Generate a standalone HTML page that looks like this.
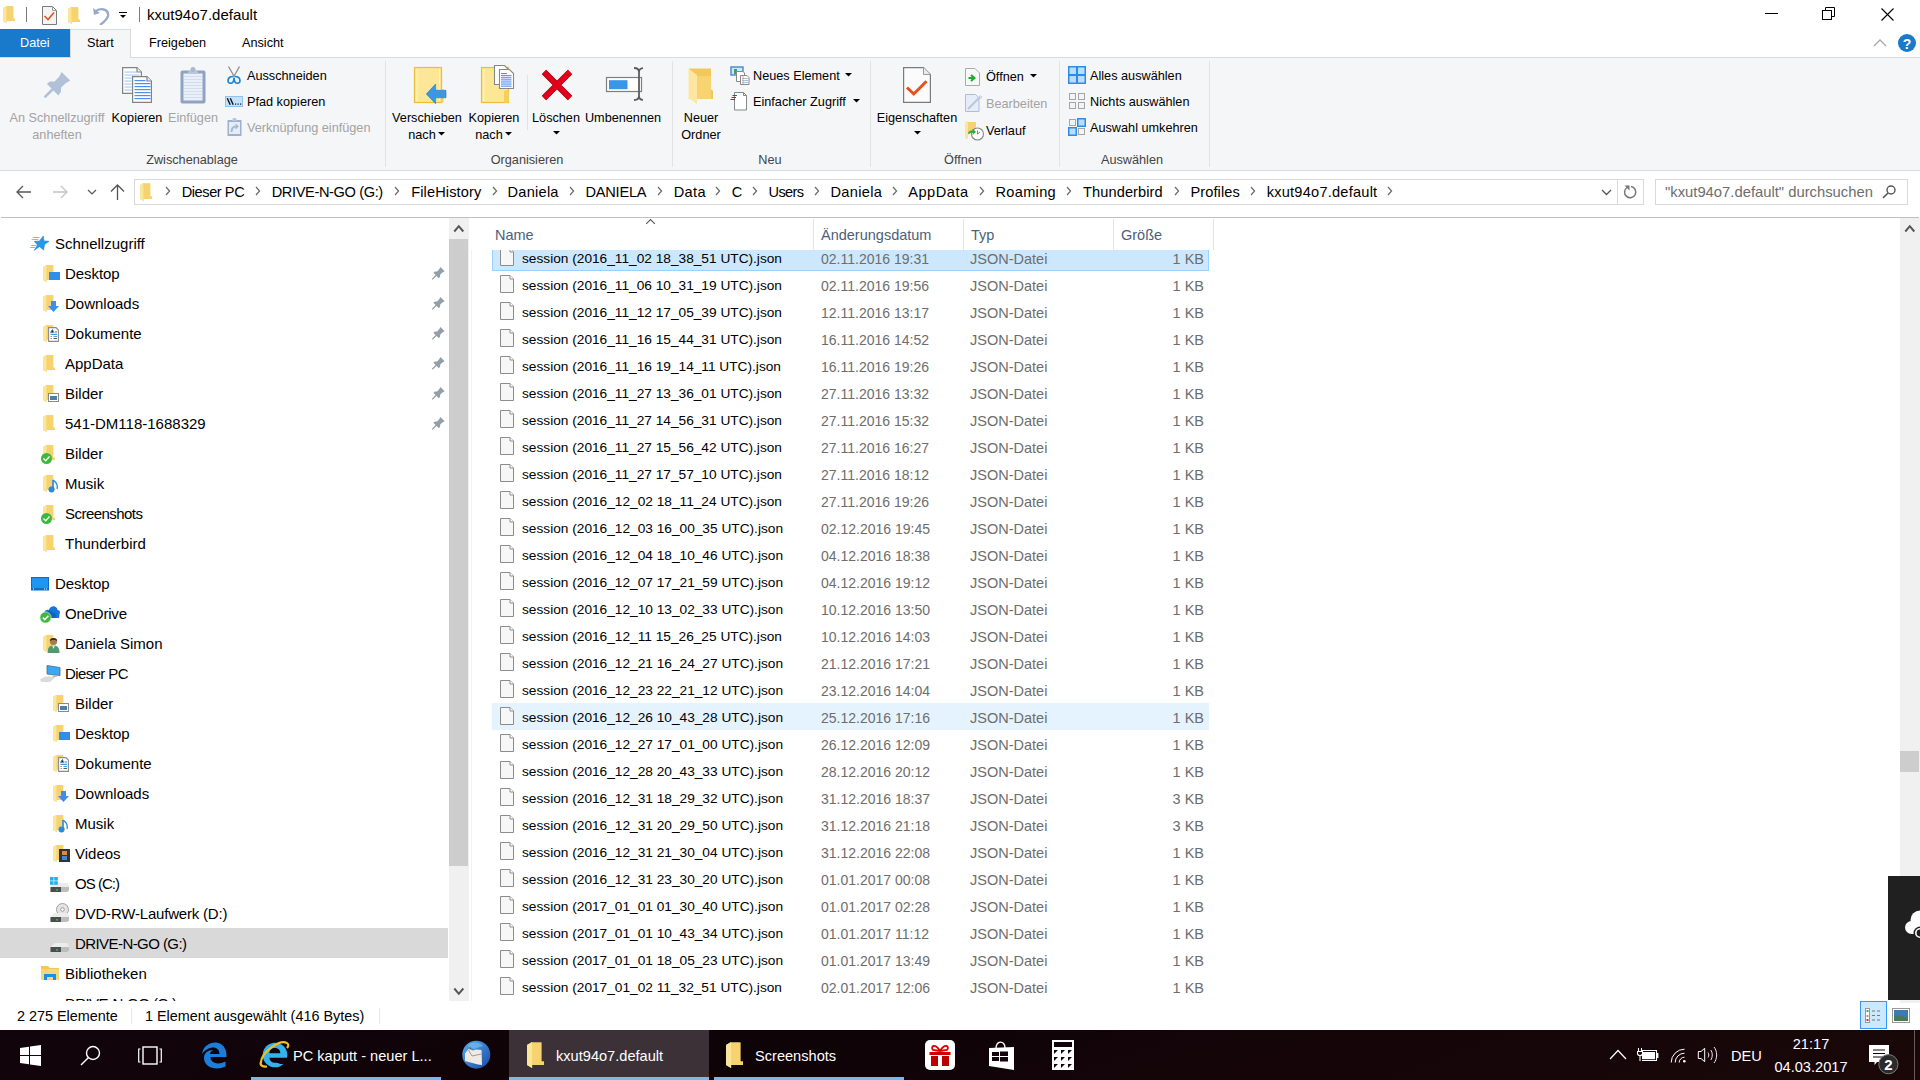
<!DOCTYPE html><html><head><meta charset="utf-8"><title>kxut94o7.default</title><style>
*{margin:0;padding:0;box-sizing:border-box}
html,body{width:1920px;height:1080px;overflow:hidden;background:#fff}
body{position:relative;font-family:"Liberation Sans",sans-serif}
.t{position:absolute;white-space:nowrap;line-height:1}
.r{position:absolute;display:block}
</style></head><body><div class="r" style="left:0px;top:0px;width:1920px;height:29px;background:#ffffff;"></div>
<svg class="r" style="left:3px;top:6px;" width="12" height="17" viewBox="0 0 12 17"><path d="M0 2.0 L3.6 0 L3.6 0.3 L10.2 0.3 L10.2 12.8 L12 12.8 L12 15.0 L3.6 15.0 L3.6 17 L0 15.0 Z" fill="#f0c85a"/><path d="M3.6 0.3 L10.2 0.3 L10.2 12.8 L12 12.8 L12 15.0 L3.6 15.0 Z" fill="#f6d36e"/><path d="M0 2.0 L3.6 0 L3.6 17 L0 15.0 Z" fill="#fbe59b"/></svg>
<div class="r" style="left:26px;top:7px;width:1px;height:15px;background:#7a7a7a;"></div>
<svg class="r" style="left:42px;top:6px;" width="15" height="19" viewBox="0 0 15 19"><path d="M0.5 0.5 H10.5 L14.5 4.5 V18.5 H0.5 Z" fill="#f4f4f4" stroke="#7b7b7b"/><path d="M10.5 0.5 V4.5 H14.5" fill="none" stroke="#9a9a9a"/><path d="M2.5 10 L6 13.5 L12 6.5" fill="none" stroke="#e8501c" stroke-width="1.6"/></svg>
<svg class="r" style="left:68px;top:7px;" width="12" height="17" viewBox="0 0 12 17"><path d="M0 2.0 L3.6 0 L3.6 0.3 L10.2 0.3 L10.2 12.8 L12 12.8 L12 15.0 L3.6 15.0 L3.6 17 L0 15.0 Z" fill="#f0c85a"/><path d="M3.6 0.3 L10.2 0.3 L10.2 12.8 L12 12.8 L12 15.0 L3.6 15.0 Z" fill="#f6d36e"/><path d="M0 2.0 L3.6 0 L3.6 17 L0 15.0 Z" fill="#fbe59b"/></svg>
<svg class="r" style="left:92px;top:6px;" width="18" height="19" viewBox="0 0 18 19"><path d="M3 6 C8 1 17 3 16 10 C15 14 12 16 8 19" fill="none" stroke="#98aac6" stroke-width="2.4"/><path d="M1 2 L2 9 L8 7 Z" fill="#98aac6"/></svg>
<svg class="r" style="left:119px;top:12px;" width="8" height="7" viewBox="0 0 8 7"><rect x="0" y="0" width="8" height="1" fill="#000"/><path d="M1 3 H7 L4 6 Z" fill="#000"/></svg>
<div class="r" style="left:139px;top:7px;width:1px;height:15px;background:#7a7a7a;"></div>
<div class="t " style="left:147px;top:7.30px;font-size:15px;color:#000;">kxut94o7.default</div>
<div class="r" style="left:1765px;top:13px;width:13px;height:1px;background:#000;"></div>
<svg class="r" style="left:1822px;top:7px;" width="13" height="13" viewBox="0 0 13 13"><rect x="0.5" y="3.5" width="9" height="9" fill="none" stroke="#000"/><path d="M3.5 3.5 V0.5 H12.5 V9.5 H9.5" fill="none" stroke="#000"/></svg>
<svg class="r" style="left:1881px;top:8px;" width="13" height="13" viewBox="0 0 13 13"><path d="M0.5 0.5 L12.5 12.5 M12.5 0.5 L0.5 12.5" stroke="#000" stroke-width="1.1"/></svg>
<div class="r" style="left:0px;top:29px;width:1920px;height:28px;background:#ffffff;"></div>
<div class="r" style="left:0px;top:29px;width:70px;height:28px;background:#1979ca;"></div>
<div class="t " style="left:20px;top:37.25px;font-size:12.7px;color:#ffffff;">Datei</div>
<div class="r" style="left:70px;top:29px;width:61px;height:29px;background:#f5f6f7;border:1px solid #dadbdc;border-bottom:none"></div>
<div class="t " style="left:87px;top:37.25px;font-size:12.7px;color:#000;">Start</div>
<div class="t " style="left:149px;top:37.25px;font-size:12.7px;color:#000;">Freigeben</div>
<div class="t " style="left:242px;top:37.25px;font-size:12.7px;color:#000;">Ansicht</div>
<svg class="r" style="left:1873px;top:38px;" width="14" height="9" viewBox="0 0 14 9"><path d="M1 8 L7 2 L13 8" fill="none" stroke="#a8a8a8" stroke-width="1.3"/></svg>
<svg class="r" style="left:1898px;top:34px;" width="18" height="18" viewBox="0 0 18 18"><circle cx="9" cy="9" r="9" fill="#1979ca"/><text x="9" y="14.5" font-family="Liberation Sans" font-size="14" font-weight="bold" fill="#fff" text-anchor="middle">?</text></svg>
<div class="r" style="left:0px;top:57px;width:1920px;height:114px;background:#f5f6f7;border-top:1px solid #dadbdc;border-bottom:1px solid #dadbdc"></div>
<div class="r" style="left:71px;top:57px;width:59px;height:1px;background:#f5f6f7;"></div>
<div class="r" style="left:385px;top:61px;width:1px;height:106px;background:#e2e3e4;"></div>
<div class="r" style="left:672px;top:61px;width:1px;height:106px;background:#e2e3e4;"></div>
<div class="r" style="left:870px;top:61px;width:1px;height:106px;background:#e2e3e4;"></div>
<div class="r" style="left:1059px;top:61px;width:1px;height:106px;background:#e2e3e4;"></div>
<div class="r" style="left:1209px;top:61px;width:1px;height:106px;background:#e2e3e4;"></div>
<div class="r" style="left:527px;top:75px;width:1px;height:55px;background:#e2e3e4;"></div>
<div class="t" style="left:42px;width:300px;text-align:center;top:153.75px;font-size:12.7px;color:#444;">Zwischenablage</div>
<div class="t" style="left:377px;width:300px;text-align:center;top:153.75px;font-size:12.7px;color:#444;">Organisieren</div>
<div class="t" style="left:620px;width:300px;text-align:center;top:153.75px;font-size:12.7px;color:#444;">Neu</div>
<div class="t" style="left:813px;width:300px;text-align:center;top:153.75px;font-size:12.7px;color:#444;">Öffnen</div>
<div class="t" style="left:982px;width:300px;text-align:center;top:153.75px;font-size:12.7px;color:#444;">Auswählen</div>
<svg class="r" style="left:44px;top:72px;" width="27" height="27" viewBox="0 0 27 27"><path d="M17.6 0 L26.2 8.6 L21.7 11.2 L17.1 15.6 L16.9 19.7 L14.4 23.4 L2.8 11.8 L6 9.4 L10.6 9.4 L15.3 4.4 Z" fill="#b1c1d7"/><path d="M8.5 17.5 L1.3 24.7" stroke="#b1c1d7" stroke-width="2.6" stroke-linecap="round"/></svg>
<svg class="r" style="left:122px;top:67px;" width="31" height="37" viewBox="0 0 31 37"><path d="M0.6 0.6 H15 L19.4 5 V26.4 H0.6 Z" fill="#fff" stroke="#838383" stroke-width="1.2"/><path d="M15 0.6 V5 H19.4" fill="#eee" stroke="#838383" stroke-width="1.2"/><rect x="2.5" y="4.5" width="12" height="1.1" fill="#a9c9f2"/><rect x="2.5" y="7.5" width="15" height="1.1" fill="#a9c9f2"/><rect x="2.5" y="10.5" width="15" height="1.1" fill="#a9c9f2"/><rect x="2.5" y="13.5" width="15" height="1.1" fill="#a9c9f2"/><rect x="2.5" y="16.5" width="15" height="1.1" fill="#a9c9f2"/><rect x="2.5" y="19.5" width="15" height="1.1" fill="#a9c9f2"/><rect x="2.5" y="22.5" width="15" height="1.1" fill="#a9c9f2"/><path d="M10.6 9.6 H25 L29.4 14 V35.4 H10.6 Z" fill="#fff" stroke="#838383" stroke-width="1.2"/><path d="M25 9.6 V14 H29.4" fill="#eee" stroke="#838383" stroke-width="1.2"/><rect x="12.5" y="13" width="11" height="1.2" fill="#4d8fef"/><rect x="12.5" y="16" width="16" height="1.2" fill="#4d8fef"/><rect x="12.5" y="19" width="16" height="1.2" fill="#4d8fef"/><rect x="12.5" y="22" width="16" height="1.2" fill="#4d8fef"/><rect x="12.5" y="25" width="16" height="1.2" fill="#4d8fef"/><rect x="12.5" y="28" width="16" height="1.2" fill="#4d8fef"/><rect x="12.5" y="31" width="16" height="1.2" fill="#4d8fef"/></svg>
<svg class="r" style="left:180px;top:66px;" width="26" height="38" viewBox="0 0 26 38"><rect x="0.5" y="4.5" width="25" height="33" rx="2" fill="#8fa2c2"/><rect x="3.5" y="7.5" width="19" height="27" fill="#e9f0fa"/><rect x="3.5" y="10" width="19" height="0.8" fill="#cdd8e8"/><rect x="3.5" y="13" width="19" height="0.8" fill="#cdd8e8"/><rect x="3.5" y="16" width="19" height="0.8" fill="#cdd8e8"/><rect x="3.5" y="19" width="19" height="0.8" fill="#cdd8e8"/><rect x="3.5" y="22" width="19" height="0.8" fill="#cdd8e8"/><rect x="3.5" y="25" width="19" height="0.8" fill="#cdd8e8"/><rect x="3.5" y="28" width="19" height="0.8" fill="#cdd8e8"/><rect x="3.5" y="31" width="19" height="0.8" fill="#cdd8e8"/><path d="M7 8 L9 5 H17 L19 8 Z" fill="#b9c6da"/><circle cx="13" cy="3.5" r="2.5" fill="#a9b8d0"/></svg>
<svg class="r" style="left:227px;top:66px;" width="14" height="19" viewBox="0 0 14 19"><path d="M1.5 0.5 L7.5 11 M12.5 0.5 L6.5 11" stroke="#8d8d8d" stroke-width="1.3"/><path d="M6 10.5 C3 10.5 1 12 1 15 C1 17.5 4.5 18 6 16 C7 14.5 7 12.5 7 11.5 C7 12.5 7 14.5 8 16 C9.5 18 13 17.5 13 15 C13 12 11 10.5 8 10.5" fill="none" stroke="#1a86d6" stroke-width="1.7"/></svg>
<svg class="r" style="left:225px;top:96px;" width="18" height="11" viewBox="0 0 18 11"><rect x="0.5" y="0.5" width="17" height="10" fill="#c5e2fb" stroke="#8fc3ef"/><path d="M2.3 2.3 L5.2 8.7 M5.3 2.3 L8.2 8.7" stroke="#111" stroke-width="1.4"/><rect x="10" y="7.5" width="1.2" height="1.2" fill="#111"/><rect x="12.5" y="7.5" width="1.2" height="1.2" fill="#111"/><rect x="15" y="7.5" width="1.2" height="1.2" fill="#111"/></svg>
<svg class="r" style="left:227px;top:117px;" width="15" height="19" viewBox="0 0 15 19"><rect x="0.5" y="3" width="14" height="16" fill="#9eb0cc"/><rect x="2" y="5" width="11" height="12" fill="#e5ecf6"/><path d="M5 4 L6 1 H9 L10 4 Z" fill="#b9c6da"/><path d="M4.5 15 C4.5 11 6.5 9.5 9 9.5" fill="none" stroke="#a9b8d0" stroke-width="2"/><path d="M8.5 6.5 L12 9.5 L8.5 12.5 Z" fill="#a9b8d0"/></svg>
<svg class="r" style="left:413px;top:66px;" width="34" height="38" viewBox="0 0 34 38"><rect x="1.5" y="1.5" width="27" height="35" fill="#fde796" stroke="#eabd3c" stroke-width="1.2"/><rect x="3.5" y="3" width="1" height="32" fill="#fff3c4"/><rect x="26" y="3" width="1" height="32" fill="#fff3c4"/><rect x="28" y="23" width="2.5" height="13.5" fill="#f5cf5a"/><path d="M13.3 28 L22.6 18 V24.3 H33 V31.8 H22.6 V37.8 Z" fill="#3a96e6" stroke="#2677c2" stroke-width="0.6"/></svg>
<svg class="r" style="left:480px;top:64px;" width="35" height="40" viewBox="0 0 35 40"><rect x="1.5" y="3.5" width="27" height="35" fill="#fde796" stroke="#eabd3c" stroke-width="1.2"/><rect x="3.5" y="5" width="1" height="32" fill="#fff3c4"/><rect x="24" y="26" width="5" height="13" rx="2" fill="#f5cf5a"/><path d="M14.5 1.5 H24.5 L28.5 5.5 V20.5 H14.5 Z" fill="#fff" stroke="#888" stroke-width="1.1"/><path d="M19.5 5.5 H29.5 L33.5 9.5 V24.5 H19.5 Z" fill="#fff" stroke="#888" stroke-width="1.1"/><rect x="21" y="9.0" width="6" height="1.1" fill="#4d8fef"/><rect x="21" y="11.1" width="10.5" height="1.1" fill="#4d8fef"/><rect x="21" y="13.2" width="10.5" height="1.1" fill="#4d8fef"/><rect x="21" y="15.3" width="10.5" height="1.1" fill="#4d8fef"/><rect x="21" y="17.4" width="10.5" height="1.1" fill="#4d8fef"/><rect x="21" y="19.5" width="10.5" height="1.1" fill="#4d8fef"/><rect x="21" y="21.6" width="10.5" height="1.1" fill="#4d8fef"/></svg>
<svg class="r" style="left:540px;top:68px;" width="34" height="34" viewBox="0 0 34 34"><path d="M4 4 L30 30 M30 4 L4 30" stroke="#9c0010" stroke-width="6.2"/><path d="M4 4 L30 30 M30 4 L4 30" stroke="#e3001b" stroke-width="5"/></svg>
<svg class="r" style="left:605px;top:67px;" width="38" height="35" viewBox="0 0 38 35"><rect x="1.5" y="10.5" width="35" height="14" fill="#fff" stroke="#7f7f7f" stroke-width="1.2"/><rect x="4" y="13.2" width="18.5" height="9" fill="#3a96e6"/><path d="M29 1 Q34 1 34 5 V29 Q34 33 29 33 M39 1 Q34 1 34 5 M39 33 Q34 33 34 29" fill="none" stroke="#5c5c5c" stroke-width="1.8"/></svg>
<svg class="r" style="left:688px;top:68px;" width="25" height="36" viewBox="0 0 25 36"><path d="M1 0.5 H23 V21 L25 23 V31 H1 Z" fill="#f2c85c"/><path d="M9 8 H23 V31 H9 Z" fill="#f7d470"/><path d="M0.5 0.5 L9 7 V36 L0.5 30 Z" fill="#fde7a0"/></svg>
<svg class="r" style="left:730px;top:66px;" width="20" height="19" viewBox="0 0 20 19"><rect x="1" y="1" width="12" height="8" fill="#cfe6fb" stroke="#3b8ad0" stroke-width="1.4"/><rect x="4" y="3" width="3" height="5" fill="#4a9a5c"/><path d="M6.5 5.5 H13 L14.5 7 V15.5 H6.5 Z" fill="#fff" stroke="#888"/><path d="M10.5 9.5 H17 L19 11.5 V18.5 H10.5 Z" fill="#fff" stroke="#888"/><path d="M12 12.5 H18 M12 14.5 H18 M12 16.5 H18" stroke="#9cc4ec" stroke-width="1"/><path d="M13 10 V18" stroke="#e98b8b" stroke-width="0.8"/></svg>
<svg class="r" style="left:730px;top:92px;" width="18" height="19" viewBox="0 0 18 19"><path d="M4.5 0.5 H13.5 L16.5 3.5 V18 H4.5 Z" fill="#fff" stroke="#888"/><path d="M13.5 0.5 V3.5 H16.5" fill="none" stroke="#888"/><path d="M2.5 3.5 H7 M1.5 5.5 H6 M0.5 7.5 H5" stroke="#1a5fb0" stroke-width="1.1"/></svg>
<svg class="r" style="left:903px;top:67px;" width="29" height="37" viewBox="0 0 29 37"><path d="M0.6 0.6 H20.5 L27.4 7.5 V35.4 H0.6 Z" fill="#fbfbfb" stroke="#7b7b7b" stroke-width="1.2"/><path d="M20.5 0.6 V7.5 H27.4" fill="#ebebeb" stroke="#9a9a9a" stroke-width="1"/><path d="M4 20.5 L10.8 27 L23.5 14.2" fill="none" stroke="#e8501c" stroke-width="3"/></svg>
<svg class="r" style="left:965px;top:68px;" width="15" height="18" viewBox="0 0 15 18"><path d="M0.5 0.5 H10 L14.5 5 V17.5 H0.5 Z" fill="#f8f8f8" stroke="#aaa"/><path d="M3.5 10 H8 M6 7 L9.5 10 L6 13" fill="none" stroke="#1dab2c" stroke-width="2"/></svg>
<svg class="r" style="left:965px;top:94px;" width="18" height="18" viewBox="0 0 18 18"><path d="M0.5 0.5 H10.5 L14 4 V17.5 H0.5 Z" fill="#e6edf8" stroke="#aebed6"/><path d="M3 15 L15 3" stroke="#b9c6da" stroke-width="2"/><path d="M14 2 L17 2.5 L15.5 5" fill="none" stroke="#b9c6da" stroke-width="0.8"/></svg>
<svg class="r" style="left:965px;top:121px;" width="20" height="20" viewBox="0 0 20 20"><path d="M0.5 1.5 L3 0 V1 H11 V13 H3 V18 L0.5 17 Z" fill="#f6d36e"/><path d="M0.5 1.5 L3 0 V18 L0.5 17 Z" fill="#fde59b"/><circle cx="12.5" cy="13" r="6" fill="#fff" stroke="#888" stroke-width="1.1"/><path d="M12.5 9.5 V13 L15 11" stroke="#666" stroke-width="0.8" fill="none"/><path d="M3 13.5 C3 10 5 9 8 9.5 L7.5 7.5 L11 11 L7.5 14 L8 12 C6 11.5 4.5 12 3 13.5 Z" fill="#2aae3a"/></svg>
<svg class="r" style="left:1068px;top:66px;" width="18" height="18" viewBox="0 0 18 18"><rect x="0" y="0" width="18" height="18" fill="#2b8de8"/><rect x="1.5" y="1.5" width="6.5" height="6.5" fill="#b9defd"/><rect x="10" y="1.5" width="6.5" height="6.5" fill="#b9defd"/><rect x="1.5" y="10" width="6.5" height="6.5" fill="#b9defd"/><rect x="10" y="10" width="6.5" height="6.5" fill="#b9defd"/></svg>
<svg class="r" style="left:1069px;top:93px;" width="16" height="16" viewBox="0 0 16 16"><rect x="0.5" y="0.5" width="6" height="6" fill="#f4f4f4" stroke="#a5a5a5"/><rect x="9.5" y="0.5" width="6" height="6" fill="#f4f4f4" stroke="#a5a5a5"/><rect x="0.5" y="9.5" width="6" height="6" fill="#f4f4f4" stroke="#a5a5a5"/><rect x="9.5" y="9.5" width="6" height="6" fill="#f4f4f4" stroke="#a5a5a5"/></svg>
<svg class="r" style="left:1068px;top:118px;" width="18" height="18" viewBox="0 0 18 18"><rect x="1.5" y="1.5" width="6" height="6" fill="#f4f4f4" stroke="#a5a5a5"/><rect x="9" y="0" width="9" height="9" fill="#2b8de8"/><rect x="10.5" y="1.5" width="6" height="6" fill="#b9defd"/><rect x="0" y="9" width="9" height="9" fill="#2b8de8"/><rect x="1.5" y="10.5" width="6" height="6" fill="#b9defd"/><rect x="10.5" y="10.5" width="6" height="6" fill="#f4f4f4" stroke="#a5a5a5"/></svg>
<div class="t" style="left:-93px;width:300px;text-align:center;top:111.75px;font-size:12.7px;color:#a3a3a3;">An Schnellzugriff</div>
<div class="t" style="left:-93px;width:300px;text-align:center;top:128.75px;font-size:12.7px;color:#a3a3a3;">anheften</div>
<div class="t" style="left:-13px;width:300px;text-align:center;top:111.75px;font-size:12.7px;color:#000;">Kopieren</div>
<div class="t" style="left:43px;width:300px;text-align:center;top:111.75px;font-size:12.7px;color:#a3a3a3;">Einfügen</div>
<div class="t" style="left:277px;width:300px;text-align:center;top:111.75px;font-size:12.7px;color:#000;">Verschieben</div>
<div class="t" style="left:272px;width:300px;text-align:center;top:128.75px;font-size:12.7px;color:#000;">nach</div>
<div class="t" style="left:344px;width:300px;text-align:center;top:111.75px;font-size:12.7px;color:#000;">Kopieren</div>
<div class="t" style="left:339px;width:300px;text-align:center;top:128.75px;font-size:12.7px;color:#000;">nach</div>
<div class="t" style="left:406px;width:300px;text-align:center;top:111.75px;font-size:12.7px;color:#000;">Löschen</div>
<div class="t" style="left:473px;width:300px;text-align:center;top:111.75px;font-size:12.7px;color:#000;">Umbenennen</div>
<div class="t" style="left:551px;width:300px;text-align:center;top:111.75px;font-size:12.7px;color:#000;">Neuer</div>
<div class="t" style="left:551px;width:300px;text-align:center;top:128.75px;font-size:12.7px;color:#000;">Ordner</div>
<div class="t" style="left:767px;width:300px;text-align:center;top:111.75px;font-size:12.7px;color:#000;">Eigenschaften</div>
<svg class="r" style="left:438px;top:132px;" width="7" height="4" viewBox="0 0 7 4"><path d="M0 0 H7 L3.5 3.5 Z" fill="#000"/></svg>
<svg class="r" style="left:505px;top:132px;" width="7" height="4" viewBox="0 0 7 4"><path d="M0 0 H7 L3.5 3.5 Z" fill="#000"/></svg>
<svg class="r" style="left:553px;top:131px;" width="7" height="4" viewBox="0 0 7 4"><path d="M0 0 H7 L3.5 3.5 Z" fill="#000"/></svg>
<svg class="r" style="left:914px;top:131px;" width="7" height="4" viewBox="0 0 7 4"><path d="M0 0 H7 L3.5 3.5 Z" fill="#000"/></svg>
<div class="t " style="left:247px;top:69.75px;font-size:12.7px;color:#000;">Ausschneiden</div>
<div class="t " style="left:247px;top:95.75px;font-size:12.7px;color:#000;">Pfad kopieren</div>
<div class="t " style="left:247px;top:121.75px;font-size:12.7px;color:#a3a3a3;">Verknüpfung einfügen</div>
<div class="t " style="left:753px;top:69.75px;font-size:12.7px;color:#000;">Neues Element</div>
<div class="t " style="left:753px;top:95.75px;font-size:12.7px;color:#000;">Einfacher Zugriff</div>
<svg class="r" style="left:845px;top:73px;" width="7" height="4" viewBox="0 0 7 4"><path d="M0 0 H7 L3.5 3.5 Z" fill="#000"/></svg>
<svg class="r" style="left:853px;top:99px;" width="7" height="4" viewBox="0 0 7 4"><path d="M0 0 H7 L3.5 3.5 Z" fill="#000"/></svg>
<div class="t " style="left:986px;top:70.75px;font-size:12.7px;color:#000;">Öffnen</div>
<svg class="r" style="left:1030px;top:74px;" width="7" height="4" viewBox="0 0 7 4"><path d="M0 0 H7 L3.5 3.5 Z" fill="#000"/></svg>
<div class="t " style="left:986px;top:97.75px;font-size:12.7px;color:#a3a3a3;">Bearbeiten</div>
<div class="t " style="left:986px;top:124.75px;font-size:12.7px;color:#000;">Verlauf</div>
<div class="t " style="left:1090px;top:69.75px;font-size:12.7px;color:#000;">Alles auswählen</div>
<div class="t " style="left:1090px;top:95.75px;font-size:12.7px;color:#000;">Nichts auswählen</div>
<div class="t " style="left:1090px;top:121.75px;font-size:12.7px;color:#000;">Auswahl umkehren</div>
<div class="r" style="left:0px;top:171px;width:1920px;height:46px;background:#ffffff;"></div>
<div class="r" style="left:1px;top:217px;width:1918px;height:1px;background:#c0c0c0;"></div>
<svg class="r" style="left:16px;top:185px;" width="16" height="14" viewBox="0 0 16 14"><path d="M1 7 H15 M7 1 L1 7 L7 13" fill="none" stroke="#555" stroke-width="1.3"/></svg>
<svg class="r" style="left:53px;top:185px;" width="16" height="14" viewBox="0 0 16 14"><path d="M0 7 H14 M8 1 L14 7 L8 13" fill="none" stroke="#c4c4c4" stroke-width="1.3"/></svg>
<svg class="r" style="left:87px;top:189px;" width="10" height="6" viewBox="0 0 10 6"><path d="M1 1 L5 5 L9 1" fill="none" stroke="#555" stroke-width="1.2"/></svg>
<svg class="r" style="left:110px;top:184px;" width="15" height="16" viewBox="0 0 15 16"><path d="M7.5 16 V1 M1 7.5 L7.5 1 L14 7.5" fill="none" stroke="#555" stroke-width="1.3"/></svg>
<div class="r" style="left:134px;top:179px;width:1510px;height:26px;background:#ffffff;border:1px solid #d9d9d9"></div>
<div class="r" style="left:1617px;top:179px;width:1px;height:26px;background:#d9d9d9;"></div>
<svg class="r" style="left:140px;top:183px;" width="12" height="18" viewBox="0 0 12 18"><path d="M0 2.2 L3.6 0 L3.6 0.4 L10.2 0.4 L10.2 13.5 L12 13.5 L12 15.8 L3.6 15.8 L3.6 18 L0 15.8 Z" fill="#f0c85a"/><path d="M3.6 0.4 L10.2 0.4 L10.2 13.5 L12 13.5 L12 15.8 L3.6 15.8 Z" fill="#f6d36e"/><path d="M0 2.2 L3.6 0 L3.6 18 L0 15.8 Z" fill="#fbe59b"/></svg>
<div class="t " style="left:181.7px;top:184.64px;font-size:14.6px;color:#000;letter-spacing:-0.438px;">Dieser PC</div>
<div class="t " style="left:271.7px;top:184.64px;font-size:14.6px;color:#000;letter-spacing:-0.375px;">DRIVE-N-GO (G:)</div>
<div class="t " style="left:411.2px;top:184.64px;font-size:14.6px;color:#000;letter-spacing:0.108px;">FileHistory</div>
<div class="t " style="left:507.5px;top:184.64px;font-size:14.6px;color:#000;letter-spacing:0.250px;">Daniela</div>
<div class="t " style="left:585.5px;top:184.64px;font-size:14.6px;color:#000;letter-spacing:-0.242px;">DANIELA</div>
<div class="t " style="left:673.7px;top:184.64px;font-size:14.6px;color:#000;letter-spacing:0.391px;">Data</div>
<div class="t " style="left:731.7px;top:184.64px;font-size:14.6px;color:#000;letter-spacing:-0.047px;">C</div>
<div class="t " style="left:768.5px;top:184.64px;font-size:14.6px;color:#000;letter-spacing:-0.652px;">Users</div>
<div class="t " style="left:830.5px;top:184.64px;font-size:14.6px;color:#000;letter-spacing:0.333px;">Daniela</div>
<div class="t " style="left:908.2px;top:184.64px;font-size:14.6px;color:#000;letter-spacing:0.534px;">AppData</div>
<div class="t " style="left:995.5px;top:184.64px;font-size:14.6px;color:#000;letter-spacing:0.299px;">Roaming</div>
<div class="t " style="left:1083.0px;top:184.64px;font-size:14.6px;color:#000;letter-spacing:0.100px;">Thunderbird</div>
<div class="t " style="left:1190.5px;top:184.64px;font-size:14.6px;color:#000;letter-spacing:0.075px;">Profiles</div>
<div class="t " style="left:1266.7px;top:184.64px;font-size:14.6px;color:#000;letter-spacing:0.226px;">kxut94o7.default</div>
<svg class="r" style="left:165px;top:186px;" width="6" height="10" viewBox="0 0 6 10"><path d="M1 1 L4.6 5 L1 9" fill="none" stroke="#6a6a6a" stroke-width="1.2"/></svg>
<svg class="r" style="left:255px;top:186px;" width="6" height="10" viewBox="0 0 6 10"><path d="M1 1 L4.6 5 L1 9" fill="none" stroke="#6a6a6a" stroke-width="1.2"/></svg>
<svg class="r" style="left:394px;top:186px;" width="6" height="10" viewBox="0 0 6 10"><path d="M1 1 L4.6 5 L1 9" fill="none" stroke="#6a6a6a" stroke-width="1.2"/></svg>
<svg class="r" style="left:491.7px;top:186px;" width="6" height="10" viewBox="0 0 6 10"><path d="M1 1 L4.6 5 L1 9" fill="none" stroke="#6a6a6a" stroke-width="1.2"/></svg>
<svg class="r" style="left:569px;top:186px;" width="6" height="10" viewBox="0 0 6 10"><path d="M1 1 L4.6 5 L1 9" fill="none" stroke="#6a6a6a" stroke-width="1.2"/></svg>
<svg class="r" style="left:657px;top:186px;" width="6" height="10" viewBox="0 0 6 10"><path d="M1 1 L4.6 5 L1 9" fill="none" stroke="#6a6a6a" stroke-width="1.2"/></svg>
<svg class="r" style="left:715px;top:186px;" width="6" height="10" viewBox="0 0 6 10"><path d="M1 1 L4.6 5 L1 9" fill="none" stroke="#6a6a6a" stroke-width="1.2"/></svg>
<svg class="r" style="left:752px;top:186px;" width="6" height="10" viewBox="0 0 6 10"><path d="M1 1 L4.6 5 L1 9" fill="none" stroke="#6a6a6a" stroke-width="1.2"/></svg>
<svg class="r" style="left:814px;top:186px;" width="6" height="10" viewBox="0 0 6 10"><path d="M1 1 L4.6 5 L1 9" fill="none" stroke="#6a6a6a" stroke-width="1.2"/></svg>
<svg class="r" style="left:892px;top:186px;" width="6" height="10" viewBox="0 0 6 10"><path d="M1 1 L4.6 5 L1 9" fill="none" stroke="#6a6a6a" stroke-width="1.2"/></svg>
<svg class="r" style="left:979px;top:186px;" width="6" height="10" viewBox="0 0 6 10"><path d="M1 1 L4.6 5 L1 9" fill="none" stroke="#6a6a6a" stroke-width="1.2"/></svg>
<svg class="r" style="left:1066px;top:186px;" width="6" height="10" viewBox="0 0 6 10"><path d="M1 1 L4.6 5 L1 9" fill="none" stroke="#6a6a6a" stroke-width="1.2"/></svg>
<svg class="r" style="left:1174px;top:186px;" width="6" height="10" viewBox="0 0 6 10"><path d="M1 1 L4.6 5 L1 9" fill="none" stroke="#6a6a6a" stroke-width="1.2"/></svg>
<svg class="r" style="left:1250px;top:186px;" width="6" height="10" viewBox="0 0 6 10"><path d="M1 1 L4.6 5 L1 9" fill="none" stroke="#6a6a6a" stroke-width="1.2"/></svg>
<svg class="r" style="left:1387px;top:186px;" width="6" height="10" viewBox="0 0 6 10"><path d="M1 1 L4.6 5 L1 9" fill="none" stroke="#6a6a6a" stroke-width="1.2"/></svg>
<svg class="r" style="left:1601px;top:189px;" width="11" height="7" viewBox="0 0 11 7"><path d="M1 1 L5.5 5.5 L10 1" fill="none" stroke="#555" stroke-width="1.3"/></svg>
<svg class="r" style="left:1623px;top:184px;" width="15" height="16" viewBox="0 0 15 16"><path d="M4 3.5 A5.6 5.6 0 1 0 8 2.6" fill="none" stroke="#777" stroke-width="1.5"/><path d="M1.5 1.5 H6.5 V6.5 Z" fill="#777"/></svg>
<div class="r" style="left:1655px;top:179px;width:253px;height:26px;background:#ffffff;border:1px solid #d9d9d9"></div>
<div class="t " style="left:1665px;top:185.47px;font-size:14.8px;color:#6d6d6d;">"kxut94o7.default" durchsuchen</div>
<svg class="r" style="left:1882px;top:185px;" width="14" height="14" viewBox="0 0 14 14"><circle cx="9" cy="5" r="4" fill="none" stroke="#555" stroke-width="1.4"/><path d="M6 8 L1 13" stroke="#555" stroke-width="1.6"/></svg>
<div class="r" style="left:0;top:218px;width:449px;height:783px;overflow:hidden;background:#fff">
<div class="r" style="left:0;top:-218px;width:449px;height:1080px">
<div class="r" style="left:0px;top:928px;width:448px;height:30px;background:#d9d9d9;"></div>
<div class="t " style="left:55px;top:236.30px;font-size:15px;color:#000;">Schnellzugriff</div>
<svg class="r" style="left:30px;top:235px;" width="20" height="16" viewBox="0 0 20 16"><path d="M13.3 1 L13.9 6 L19 6.3 L14.5 9.5 L13.5 15 L9.5 11.5 L4.3 15.3 L7.5 10 L4.3 6.3 L9.3 6.2 Z" fill="#1e9af0" stroke="#1580d8" stroke-width="0.6" stroke-linejoin="round"/><path d="M3 2.5 H9 M2 4.5 H8 M1.5 10.5 H6 M0.5 12.5 H5" stroke="#7cc0f2" stroke-width="1" stroke-linecap="round"/></svg>
<div class="t " style="left:65px;top:266.30px;font-size:15px;color:#000;letter-spacing:-0.055px;">Desktop</div>
<svg class="r" style="left:43px;top:265px;" width="12" height="17" viewBox="0 0 12 17"><path d="M0 2.0 L3.6 0 L3.6 0.3 L10.2 0.3 L10.2 12.8 L12 12.8 L12 15.0 L3.6 15.0 L3.6 17 L0 15.0 Z" fill="#f0c85a"/><path d="M3.6 0.3 L10.2 0.3 L10.2 12.8 L12 12.8 L12 15.0 L3.6 15.0 Z" fill="#f6d36e"/><path d="M0 2.0 L3.6 0 L3.6 17 L0 15.0 Z" fill="#fbe59b"/></svg>
<div class="r" style="left:49px;top:272px;width:11px;height:8px;background:#2e8ee8;"></div>
<div class="t " style="left:65px;top:296.30px;font-size:15px;color:#000;">Downloads</div>
<svg class="r" style="left:43px;top:295px;" width="12" height="17" viewBox="0 0 12 17"><path d="M0 2.0 L3.6 0 L3.6 0.3 L10.2 0.3 L10.2 12.8 L12 12.8 L12 15.0 L3.6 15.0 L3.6 17 L0 15.0 Z" fill="#f0c85a"/><path d="M3.6 0.3 L10.2 0.3 L10.2 12.8 L12 12.8 L12 15.0 L3.6 15.0 Z" fill="#f6d36e"/><path d="M0 2.0 L3.6 0 L3.6 17 L0 15.0 Z" fill="#fbe59b"/></svg>
<svg class="r" style="left:48px;top:301px;" width="11" height="11" viewBox="0 0 11 11"><path d="M3 0 H8 V5 H11 L5.5 11 L0 5 H3 Z" fill="#3d8ee6"/></svg>
<div class="t " style="left:65px;top:326.30px;font-size:15px;color:#000;">Dokumente</div>
<svg class="r" style="left:43px;top:325px;" width="12" height="17" viewBox="0 0 12 17"><path d="M0 2.0 L3.6 0 L3.6 0.3 L10.2 0.3 L10.2 12.8 L12 12.8 L12 15.0 L3.6 15.0 L3.6 17 L0 15.0 Z" fill="#f0c85a"/><path d="M3.6 0.3 L10.2 0.3 L10.2 12.8 L12 12.8 L12 15.0 L3.6 15.0 Z" fill="#f6d36e"/><path d="M0 2.0 L3.6 0 L3.6 17 L0 15.0 Z" fill="#fbe59b"/></svg>
<svg class="r" style="left:48px;top:327px;" width="11" height="15" viewBox="0 0 11 15"><path d="M0.6 0.6 H8 L10.4 3 V14.4 H0.6 Z" fill="#fff" stroke="#8a8a8a" stroke-width="1.1"/><path d="M2.5 5.5 L4.5 2.5 L5.5 5.5 M6.5 5 H9 M2.5 7.3 H9" stroke="#1a82d8" stroke-width="1"/><path d="M2.5 9.5 H4 M2.5 11.5 H4" stroke="#999" stroke-width="1"/><path d="M5.5 9.5 H9" stroke="#5a9af0" stroke-width="1"/><path d="M5.5 11.5 H9" stroke="#3c6a4c" stroke-width="1"/></svg>
<div class="t " style="left:65px;top:356.30px;font-size:15px;color:#000;">AppData</div>
<svg class="r" style="left:43px;top:355px;" width="12" height="17" viewBox="0 0 12 17"><path d="M0 2.0 L3.6 0 L3.6 0.3 L10.2 0.3 L10.2 12.8 L12 12.8 L12 15.0 L3.6 15.0 L3.6 17 L0 15.0 Z" fill="#f0c85a"/><path d="M3.6 0.3 L10.2 0.3 L10.2 12.8 L12 12.8 L12 15.0 L3.6 15.0 Z" fill="#f6d36e"/><path d="M0 2.0 L3.6 0 L3.6 17 L0 15.0 Z" fill="#fbe59b"/></svg>
<div class="t " style="left:65px;top:386.30px;font-size:15px;color:#000;">Bilder</div>
<svg class="r" style="left:43px;top:385px;" width="12" height="17" viewBox="0 0 12 17"><path d="M0 2.0 L3.6 0 L3.6 0.3 L10.2 0.3 L10.2 12.8 L12 12.8 L12 15.0 L3.6 15.0 L3.6 17 L0 15.0 Z" fill="#f0c85a"/><path d="M3.6 0.3 L10.2 0.3 L10.2 12.8 L12 12.8 L12 15.0 L3.6 15.0 Z" fill="#f6d36e"/><path d="M0 2.0 L3.6 0 L3.6 17 L0 15.0 Z" fill="#fbe59b"/></svg>
<svg class="r" style="left:48px;top:393px;" width="11" height="9" viewBox="0 0 11 9"><rect x="0.5" y="0.5" width="10" height="8" fill="#fff" stroke="#8a8a8a"/><rect x="2" y="3" width="7" height="4" fill="#4e7fa8"/></svg>
<div class="t " style="left:65px;top:416.30px;font-size:15px;color:#000;">541-DM118-1688329</div>
<svg class="r" style="left:43px;top:415px;" width="12" height="17" viewBox="0 0 12 17"><path d="M0 2.0 L3.6 0 L3.6 0.3 L10.2 0.3 L10.2 12.8 L12 12.8 L12 15.0 L3.6 15.0 L3.6 17 L0 15.0 Z" fill="#f0c85a"/><path d="M3.6 0.3 L10.2 0.3 L10.2 12.8 L12 12.8 L12 15.0 L3.6 15.0 Z" fill="#f6d36e"/><path d="M0 2.0 L3.6 0 L3.6 17 L0 15.0 Z" fill="#fbe59b"/></svg>
<div class="t " style="left:65px;top:446.30px;font-size:15px;color:#000;">Bilder</div>
<svg class="r" style="left:43px;top:445px;" width="12" height="17" viewBox="0 0 12 17"><path d="M0 2.0 L3.6 0 L3.6 0.3 L10.2 0.3 L10.2 12.8 L12 12.8 L12 15.0 L3.6 15.0 L3.6 17 L0 15.0 Z" fill="#f0c85a"/><path d="M3.6 0.3 L10.2 0.3 L10.2 12.8 L12 12.8 L12 15.0 L3.6 15.0 Z" fill="#f6d36e"/><path d="M0 2.0 L3.6 0 L3.6 17 L0 15.0 Z" fill="#fbe59b"/></svg>
<svg class="r" style="left:41px;top:453px;" width="11" height="11" viewBox="0 0 11 11"><circle cx="5.5" cy="5.5" r="5.5" fill="#3cb83c"/><path d="M2.5 5.5 L4.7 7.7 L8.5 3.5" fill="none" stroke="#fff" stroke-width="1.4"/></svg>
<div class="t " style="left:65px;top:476.30px;font-size:15px;color:#000;">Musik</div>
<svg class="r" style="left:43px;top:475px;" width="12" height="17" viewBox="0 0 12 17"><path d="M0 2.0 L3.6 0 L3.6 0.3 L10.2 0.3 L10.2 12.8 L12 12.8 L12 15.0 L3.6 15.0 L3.6 17 L0 15.0 Z" fill="#f0c85a"/><path d="M3.6 0.3 L10.2 0.3 L10.2 12.8 L12 12.8 L12 15.0 L3.6 15.0 Z" fill="#f6d36e"/><path d="M0 2.0 L3.6 0 L3.6 17 L0 15.0 Z" fill="#fbe59b"/></svg>
<svg class="r" style="left:48px;top:479px;" width="11" height="14" viewBox="0 0 11 14"><path d="M5 1 V10" stroke="#2a8ae0" stroke-width="1.6"/><circle cx="3.5" cy="10.5" r="3" fill="#2a8ae0"/><path d="M5 1 C8 3 10 6 9 10" fill="none" stroke="#2a8ae0" stroke-width="1.3"/></svg>
<div class="t " style="left:65px;top:506.30px;font-size:15px;color:#000;letter-spacing:-0.539px;">Screenshots</div>
<svg class="r" style="left:43px;top:505px;" width="12" height="17" viewBox="0 0 12 17"><path d="M0 2.0 L3.6 0 L3.6 0.3 L10.2 0.3 L10.2 12.8 L12 12.8 L12 15.0 L3.6 15.0 L3.6 17 L0 15.0 Z" fill="#f0c85a"/><path d="M3.6 0.3 L10.2 0.3 L10.2 12.8 L12 12.8 L12 15.0 L3.6 15.0 Z" fill="#f6d36e"/><path d="M0 2.0 L3.6 0 L3.6 17 L0 15.0 Z" fill="#fbe59b"/></svg>
<svg class="r" style="left:41px;top:513px;" width="11" height="11" viewBox="0 0 11 11"><circle cx="5.5" cy="5.5" r="5.5" fill="#3cb83c"/><path d="M2.5 5.5 L4.7 7.7 L8.5 3.5" fill="none" stroke="#fff" stroke-width="1.4"/></svg>
<div class="t " style="left:65px;top:536.30px;font-size:15px;color:#000;">Thunderbird</div>
<svg class="r" style="left:43px;top:535px;" width="12" height="17" viewBox="0 0 12 17"><path d="M0 2.0 L3.6 0 L3.6 0.3 L10.2 0.3 L10.2 12.8 L12 12.8 L12 15.0 L3.6 15.0 L3.6 17 L0 15.0 Z" fill="#f0c85a"/><path d="M3.6 0.3 L10.2 0.3 L10.2 12.8 L12 12.8 L12 15.0 L3.6 15.0 Z" fill="#f6d36e"/><path d="M0 2.0 L3.6 0 L3.6 17 L0 15.0 Z" fill="#fbe59b"/></svg>
<div class="t " style="left:55px;top:576.30px;font-size:15px;color:#000;letter-spacing:-0.055px;">Desktop</div>
<svg class="r" style="left:31px;top:577px;" width="18" height="14" viewBox="0 0 18 14"><rect x="0.5" y="0.5" width="17" height="12.5" fill="#1e96ee" stroke="#0f6cc0"/><rect x="0.5" y="11" width="17" height="2" fill="#0f6cc0"/><rect x="2" y="11.5" width="1" height="1" fill="#fff"/><rect x="13" y="11.5" width="1" height="1" fill="#fff"/><rect x="15" y="11.5" width="1" height="1" fill="#fff"/></svg>
<div class="t " style="left:65px;top:606.30px;font-size:15px;color:#000;letter-spacing:-0.194px;">OneDrive</div>
<svg class="r" style="left:39px;top:605px;" width="21" height="19" viewBox="0 0 21 19"><path d="M5 10 C4 6 8 4 10 5 C11 0 18 0 18.5 5 C21 5 21.5 8 20.5 9 L20 13 H8 Z" fill="#1476d6"/><path d="M3 13 C1 10 4 7 7 8 C9 5 13 6 13.5 8 C16 7.5 18 10 16 13 Z" fill="#0e62b8"/><circle cx="6.5" cy="12.5" r="5.6" fill="#3db83f" stroke="#fff" stroke-width="0.6"/><path d="M3.8 12.6 L5.8 14.6 L9.4 10.8" fill="none" stroke="#fff" stroke-width="1.5"/></svg>
<div class="t " style="left:65px;top:636.30px;font-size:15px;color:#000;letter-spacing:-0.005px;">Daniela Simon</div>
<svg class="r" style="left:43px;top:635px;" width="12" height="17" viewBox="0 0 12 17"><path d="M0 2.0 L3.6 0 L3.6 0.3 L10.2 0.3 L10.2 12.8 L12 12.8 L12 15.0 L3.6 15.0 L3.6 17 L0 15.0 Z" fill="#f0c85a"/><path d="M3.6 0.3 L10.2 0.3 L10.2 12.8 L12 12.8 L12 15.0 L3.6 15.0 Z" fill="#f6d36e"/><path d="M0 2.0 L3.6 0 L3.6 17 L0 15.0 Z" fill="#fbe59b"/></svg>
<svg class="r" style="left:47px;top:636px;" width="13" height="17" viewBox="0 0 13 17"><path d="M0.5 17 C0.5 11 3 9.5 6.5 9.5 C10 9.5 12.5 11 12.5 17 Z" fill="#4e9a6c"/><path d="M5 9.5 L6.5 13 L8 9.5 Z" fill="#e6e6e6"/><circle cx="6.5" cy="5.5" r="3.6" fill="#a77a50"/><path d="M2.8 5 C2.5 1 10.5 1 10.2 5 C9 3.5 4 3.5 2.8 5 Z" fill="#2f2f2f"/></svg>
<div class="t " style="left:65px;top:666.30px;font-size:15px;color:#000;letter-spacing:-0.607px;">Dieser PC</div>
<svg class="r" style="left:40px;top:665px;" width="21" height="18" viewBox="0 0 21 18"><path d="M7 0.5 L20 2.5 V10.5 L7 9 Z" fill="#3aa8f5" stroke="#4a6c8c" stroke-width="0.8"/><path d="M13 10 L12.5 12 H17 L16.5 10.5 Z" fill="#b8b8b8"/><path d="M0.5 14.5 L6 12 H15 L10 16.5 H1.5 Z" fill="#dcdcdc" stroke="#c4c4c4" stroke-width="0.5"/></svg>
<div class="t " style="left:75px;top:696.30px;font-size:15px;color:#000;">Bilder</div>
<svg class="r" style="left:53px;top:695px;" width="12" height="17" viewBox="0 0 12 17"><path d="M0 2.0 L3.6 0 L3.6 0.3 L10.2 0.3 L10.2 12.8 L12 12.8 L12 15.0 L3.6 15.0 L3.6 17 L0 15.0 Z" fill="#f0c85a"/><path d="M3.6 0.3 L10.2 0.3 L10.2 12.8 L12 12.8 L12 15.0 L3.6 15.0 Z" fill="#f6d36e"/><path d="M0 2.0 L3.6 0 L3.6 17 L0 15.0 Z" fill="#fbe59b"/></svg>
<svg class="r" style="left:58px;top:703px;" width="11" height="9" viewBox="0 0 11 9"><rect x="0.5" y="0.5" width="10" height="8" fill="#fff" stroke="#8a8a8a"/><rect x="2" y="3" width="7" height="4" fill="#4e7fa8"/></svg>
<div class="t " style="left:75px;top:726.30px;font-size:15px;color:#000;letter-spacing:-0.055px;">Desktop</div>
<svg class="r" style="left:53px;top:725px;" width="12" height="17" viewBox="0 0 12 17"><path d="M0 2.0 L3.6 0 L3.6 0.3 L10.2 0.3 L10.2 12.8 L12 12.8 L12 15.0 L3.6 15.0 L3.6 17 L0 15.0 Z" fill="#f0c85a"/><path d="M3.6 0.3 L10.2 0.3 L10.2 12.8 L12 12.8 L12 15.0 L3.6 15.0 Z" fill="#f6d36e"/><path d="M0 2.0 L3.6 0 L3.6 17 L0 15.0 Z" fill="#fbe59b"/></svg>
<div class="r" style="left:59px;top:732px;width:11px;height:8px;background:#2e8ee8;"></div>
<div class="t " style="left:75px;top:756.30px;font-size:15px;color:#000;">Dokumente</div>
<svg class="r" style="left:53px;top:755px;" width="12" height="17" viewBox="0 0 12 17"><path d="M0 2.0 L3.6 0 L3.6 0.3 L10.2 0.3 L10.2 12.8 L12 12.8 L12 15.0 L3.6 15.0 L3.6 17 L0 15.0 Z" fill="#f0c85a"/><path d="M3.6 0.3 L10.2 0.3 L10.2 12.8 L12 12.8 L12 15.0 L3.6 15.0 Z" fill="#f6d36e"/><path d="M0 2.0 L3.6 0 L3.6 17 L0 15.0 Z" fill="#fbe59b"/></svg>
<svg class="r" style="left:58px;top:757px;" width="11" height="15" viewBox="0 0 11 15"><path d="M0.6 0.6 H8 L10.4 3 V14.4 H0.6 Z" fill="#fff" stroke="#8a8a8a" stroke-width="1.1"/><path d="M2.5 5.5 L4.5 2.5 L5.5 5.5 M6.5 5 H9 M2.5 7.3 H9" stroke="#1a82d8" stroke-width="1"/><path d="M2.5 9.5 H4 M2.5 11.5 H4" stroke="#999" stroke-width="1"/><path d="M5.5 9.5 H9" stroke="#5a9af0" stroke-width="1"/><path d="M5.5 11.5 H9" stroke="#3c6a4c" stroke-width="1"/></svg>
<div class="t " style="left:75px;top:786.30px;font-size:15px;color:#000;">Downloads</div>
<svg class="r" style="left:53px;top:785px;" width="12" height="17" viewBox="0 0 12 17"><path d="M0 2.0 L3.6 0 L3.6 0.3 L10.2 0.3 L10.2 12.8 L12 12.8 L12 15.0 L3.6 15.0 L3.6 17 L0 15.0 Z" fill="#f0c85a"/><path d="M3.6 0.3 L10.2 0.3 L10.2 12.8 L12 12.8 L12 15.0 L3.6 15.0 Z" fill="#f6d36e"/><path d="M0 2.0 L3.6 0 L3.6 17 L0 15.0 Z" fill="#fbe59b"/></svg>
<svg class="r" style="left:58px;top:791px;" width="11" height="11" viewBox="0 0 11 11"><path d="M3 0 H8 V5 H11 L5.5 11 L0 5 H3 Z" fill="#3d8ee6"/></svg>
<div class="t " style="left:75px;top:816.30px;font-size:15px;color:#000;">Musik</div>
<svg class="r" style="left:53px;top:815px;" width="12" height="17" viewBox="0 0 12 17"><path d="M0 2.0 L3.6 0 L3.6 0.3 L10.2 0.3 L10.2 12.8 L12 12.8 L12 15.0 L3.6 15.0 L3.6 17 L0 15.0 Z" fill="#f0c85a"/><path d="M3.6 0.3 L10.2 0.3 L10.2 12.8 L12 12.8 L12 15.0 L3.6 15.0 Z" fill="#f6d36e"/><path d="M0 2.0 L3.6 0 L3.6 17 L0 15.0 Z" fill="#fbe59b"/></svg>
<svg class="r" style="left:58px;top:819px;" width="11" height="14" viewBox="0 0 11 14"><path d="M5 1 V10" stroke="#2a8ae0" stroke-width="1.6"/><circle cx="3.5" cy="10.5" r="3" fill="#2a8ae0"/><path d="M5 1 C8 3 10 6 9 10" fill="none" stroke="#2a8ae0" stroke-width="1.3"/></svg>
<div class="t " style="left:75px;top:846.30px;font-size:15px;color:#000;">Videos</div>
<svg class="r" style="left:53px;top:845px;" width="12" height="17" viewBox="0 0 12 17"><path d="M0 2.0 L3.6 0 L3.6 0.3 L10.2 0.3 L10.2 12.8 L12 12.8 L12 15.0 L3.6 15.0 L3.6 17 L0 15.0 Z" fill="#f0c85a"/><path d="M3.6 0.3 L10.2 0.3 L10.2 12.8 L12 12.8 L12 15.0 L3.6 15.0 Z" fill="#f6d36e"/><path d="M0 2.0 L3.6 0 L3.6 17 L0 15.0 Z" fill="#fbe59b"/></svg>
<svg class="r" style="left:59px;top:849px;" width="11" height="13" viewBox="0 0 11 13"><rect x="0" y="0" width="11" height="13" fill="#333"/><rect x="3" y="2" width="5" height="4" fill="#d84"/><rect x="3" y="7" width="5" height="4" fill="#48c"/></svg>
<div class="t " style="left:75px;top:876.30px;font-size:15px;color:#000;letter-spacing:-0.974px;">OS (C:)</div>
<svg class="r" style="left:50px;top:877px;" width="20" height="16" viewBox="0 0 20 16"><g transform="translate(0,4)"><path d="M0.5 6 L5 2 H17.5 L19 6 V9.5 L17 11 H0.5 Z" fill="#d8d8d8"/><path d="M5 2 H17.5 L19 6 H0.5 Z" fill="#ececec"/><path d="M0.5 6 H11 V11 H0.5 Z" fill="#4d4d4d"/><path d="M11 6 H19 V9.5 L17 11 H11 Z" fill="#bdbdbd"/><rect x="6" y="8" width="2" height="1.6" fill="#22c03a"/></g><rect x="0" y="0" width="3.6" height="3.6" fill="#1ab4f0"/><rect x="4.2" y="0" width="3.6" height="3.6" fill="#1ab4f0"/><rect x="0" y="4.2" width="3.6" height="3.6" fill="#1ab4f0"/><rect x="4.2" y="4.2" width="3.6" height="3.6" fill="#1ab4f0"/></svg>
<div class="t " style="left:75px;top:906.30px;font-size:15px;color:#000;letter-spacing:-0.192px;">DVD-RW-Laufwerk (D:)</div>
<svg class="r" style="left:50px;top:903px;" width="20" height="20" viewBox="0 0 20 20"><circle cx="12.5" cy="6.5" r="6" fill="#e4e4e4" stroke="#a0a0a0"/><circle cx="12.5" cy="6.5" r="1.8" fill="#fff" stroke="#999"/><g transform="translate(0,8)"><path d="M0.5 6 L5 2 H17.5 L19 6 V9.5 L17 11 H0.5 Z" fill="#d8d8d8"/><path d="M5 2 H17.5 L19 6 H0.5 Z" fill="#ececec"/><path d="M0.5 6 H11 V11 H0.5 Z" fill="#4d4d4d"/><path d="M11 6 H19 V9.5 L17 11 H11 Z" fill="#bdbdbd"/><rect x="6" y="8" width="2" height="1.6" fill="#22c03a"/></g></svg>
<div class="t " style="left:75px;top:936.30px;font-size:15px;color:#000;letter-spacing:-0.571px;">DRIVE-N-GO (G:)</div>
<svg class="r" style="left:50px;top:941px;" width="20" height="12" viewBox="0 0 20 12"><path d="M0.5 6 L5 2 H17.5 L19 6 V9.5 L17 11 H0.5 Z" fill="#d8d8d8"/><path d="M5 2 H17.5 L19 6 H0.5 Z" fill="#ececec"/><path d="M0.5 6 H11 V11 H0.5 Z" fill="#4d4d4d"/><path d="M11 6 H19 V9.5 L17 11 H11 Z" fill="#bdbdbd"/><rect x="6" y="8" width="2" height="1.6" fill="#22c03a"/></svg>
<div class="t " style="left:65px;top:966.30px;font-size:15px;color:#000;">Bibliotheken</div>
<svg class="r" style="left:41px;top:965px;" width="19" height="16" viewBox="0 0 19 16"><path d="M0 1 H7 L9 3 H18 V15 H0 Z" fill="#f0c85a"/><rect x="0" y="4" width="18" height="11" fill="#f8d775"/><path d="M3 15 V9 H15 V15 H12 V12 H6 V15 Z" fill="#1b8fe6"/></svg>
<div class="t " style="left:65px;top:996.30px;font-size:15px;color:#000;letter-spacing:-0.571px;">DRIVE-N-GO (G:)</div>
<svg class="r" style="left:50px;top:1001px;" width="20" height="12" viewBox="0 0 20 12"><path d="M0.5 6 L5 2 H17.5 L19 6 V9.5 L17 11 H0.5 Z" fill="#d8d8d8"/><path d="M5 2 H17.5 L19 6 H0.5 Z" fill="#ececec"/><path d="M0.5 6 H11 V11 H0.5 Z" fill="#4d4d4d"/><path d="M11 6 H19 V9.5 L17 11 H11 Z" fill="#bdbdbd"/><rect x="6" y="8" width="2" height="1.6" fill="#22c03a"/></svg>
<svg class="r" style="left:431.5px;top:266.5px;" width="13" height="13" viewBox="0 0 13 13"><g transform="scale(0.48)"><path d="M17.6 0 L26.2 8.6 L21.7 11.2 L17.1 15.6 L16.9 19.7 L14.4 23.4 L2.8 11.8 L6 9.4 L10.6 9.4 L15.3 4.4 Z" fill="#939fa8"/><path d="M8.5 17.5 L1.3 24.7" stroke="#939fa8" stroke-width="2.8" stroke-linecap="round"/></g></svg>
<svg class="r" style="left:431.5px;top:296.5px;" width="13" height="13" viewBox="0 0 13 13"><g transform="scale(0.48)"><path d="M17.6 0 L26.2 8.6 L21.7 11.2 L17.1 15.6 L16.9 19.7 L14.4 23.4 L2.8 11.8 L6 9.4 L10.6 9.4 L15.3 4.4 Z" fill="#939fa8"/><path d="M8.5 17.5 L1.3 24.7" stroke="#939fa8" stroke-width="2.8" stroke-linecap="round"/></g></svg>
<svg class="r" style="left:431.5px;top:326.5px;" width="13" height="13" viewBox="0 0 13 13"><g transform="scale(0.48)"><path d="M17.6 0 L26.2 8.6 L21.7 11.2 L17.1 15.6 L16.9 19.7 L14.4 23.4 L2.8 11.8 L6 9.4 L10.6 9.4 L15.3 4.4 Z" fill="#939fa8"/><path d="M8.5 17.5 L1.3 24.7" stroke="#939fa8" stroke-width="2.8" stroke-linecap="round"/></g></svg>
<svg class="r" style="left:431.5px;top:356.5px;" width="13" height="13" viewBox="0 0 13 13"><g transform="scale(0.48)"><path d="M17.6 0 L26.2 8.6 L21.7 11.2 L17.1 15.6 L16.9 19.7 L14.4 23.4 L2.8 11.8 L6 9.4 L10.6 9.4 L15.3 4.4 Z" fill="#939fa8"/><path d="M8.5 17.5 L1.3 24.7" stroke="#939fa8" stroke-width="2.8" stroke-linecap="round"/></g></svg>
<svg class="r" style="left:431.5px;top:386.5px;" width="13" height="13" viewBox="0 0 13 13"><g transform="scale(0.48)"><path d="M17.6 0 L26.2 8.6 L21.7 11.2 L17.1 15.6 L16.9 19.7 L14.4 23.4 L2.8 11.8 L6 9.4 L10.6 9.4 L15.3 4.4 Z" fill="#939fa8"/><path d="M8.5 17.5 L1.3 24.7" stroke="#939fa8" stroke-width="2.8" stroke-linecap="round"/></g></svg>
<svg class="r" style="left:431.5px;top:416.5px;" width="13" height="13" viewBox="0 0 13 13"><g transform="scale(0.48)"><path d="M17.6 0 L26.2 8.6 L21.7 11.2 L17.1 15.6 L16.9 19.7 L14.4 23.4 L2.8 11.8 L6 9.4 L10.6 9.4 L15.3 4.4 Z" fill="#939fa8"/><path d="M8.5 17.5 L1.3 24.7" stroke="#939fa8" stroke-width="2.8" stroke-linecap="round"/></g></svg>
</div></div>
<div class="r" style="left:449px;top:218px;width:20px;height:783px;background:#f0f0f0;"></div>
<div class="r" style="left:449px;top:239px;width:19px;height:627px;background:#cdcdcd;"></div>
<svg class="r" style="left:453px;top:223px;" width="12" height="10" viewBox="0 0 12 10"><path d="M1.3 8.5 L5.8 3.2 L10.3 8.5" fill="none" stroke="#555" stroke-width="2"/></svg>
<svg class="r" style="left:453px;top:986.5px;" width="12" height="10" viewBox="0 0 12 10"><path d="M1.3 1.5 L5.8 6.8 L10.3 1.5" fill="none" stroke="#555" stroke-width="2"/></svg>
<div class="r" style="left:471px;top:218px;width:1px;height:783px;background:#f2f2f2;"></div>
<div class="r" style="left:471px;top:250px;width:1429px;height:753px;overflow:hidden">
<div class="r" style="left:-471px;top:-250px;width:1920px;height:1080px">
<div class="r" style="left:492px;top:244px;width:717px;height:27px;background:#cce8ff;border:1px solid #99d1ff"></div>
<svg class="r" style="left:500px;top:248px;" width="14" height="18" viewBox="0 0 14 18"><path d="M0.5 0.5 H10 L13.5 4 V17.5 H0.5 Z" fill="#f7f7f7" stroke="#8c8c8c"/><path d="M10 0.5 V4 H13.5" fill="#fff" stroke="#8c8c8c"/></svg>
<div class="t " style="left:522px;top:252.40px;font-size:13.7px;color:#000;">session (2016_11_02 18_38_51 UTC).json</div>
<div class="t " style="left:821px;top:252.15px;font-size:14.0px;color:#6d6d6d;">02.11.2016 19:31</div>
<div class="t " style="left:970px;top:251.73px;font-size:14.5px;color:#6d6d6d;">JSON-Datei</div>
<div class="t" style="right:716px;top:251.73px;font-size:14.5px;color:#6d6d6d;">1 KB</div>
<svg class="r" style="left:500px;top:275px;" width="14" height="18" viewBox="0 0 14 18"><path d="M0.5 0.5 H10 L13.5 4 V17.5 H0.5 Z" fill="#f7f7f7" stroke="#8c8c8c"/><path d="M10 0.5 V4 H13.5" fill="#fff" stroke="#8c8c8c"/></svg>
<div class="t " style="left:522px;top:279.40px;font-size:13.7px;color:#000;">session (2016_11_06 10_31_19 UTC).json</div>
<div class="t " style="left:821px;top:279.15px;font-size:14.0px;color:#6d6d6d;">02.11.2016 19:56</div>
<div class="t " style="left:970px;top:278.73px;font-size:14.5px;color:#6d6d6d;">JSON-Datei</div>
<div class="t" style="right:716px;top:278.73px;font-size:14.5px;color:#6d6d6d;">1 KB</div>
<svg class="r" style="left:500px;top:302px;" width="14" height="18" viewBox="0 0 14 18"><path d="M0.5 0.5 H10 L13.5 4 V17.5 H0.5 Z" fill="#f7f7f7" stroke="#8c8c8c"/><path d="M10 0.5 V4 H13.5" fill="#fff" stroke="#8c8c8c"/></svg>
<div class="t " style="left:522px;top:306.40px;font-size:13.7px;color:#000;">session (2016_11_12 17_05_39 UTC).json</div>
<div class="t " style="left:821px;top:306.15px;font-size:14.0px;color:#6d6d6d;">12.11.2016 13:17</div>
<div class="t " style="left:970px;top:305.73px;font-size:14.5px;color:#6d6d6d;">JSON-Datei</div>
<div class="t" style="right:716px;top:305.73px;font-size:14.5px;color:#6d6d6d;">1 KB</div>
<svg class="r" style="left:500px;top:329px;" width="14" height="18" viewBox="0 0 14 18"><path d="M0.5 0.5 H10 L13.5 4 V17.5 H0.5 Z" fill="#f7f7f7" stroke="#8c8c8c"/><path d="M10 0.5 V4 H13.5" fill="#fff" stroke="#8c8c8c"/></svg>
<div class="t " style="left:522px;top:333.40px;font-size:13.7px;color:#000;">session (2016_11_16 15_44_31 UTC).json</div>
<div class="t " style="left:821px;top:333.15px;font-size:14.0px;color:#6d6d6d;">16.11.2016 14:52</div>
<div class="t " style="left:970px;top:332.73px;font-size:14.5px;color:#6d6d6d;">JSON-Datei</div>
<div class="t" style="right:716px;top:332.73px;font-size:14.5px;color:#6d6d6d;">1 KB</div>
<svg class="r" style="left:500px;top:356px;" width="14" height="18" viewBox="0 0 14 18"><path d="M0.5 0.5 H10 L13.5 4 V17.5 H0.5 Z" fill="#f7f7f7" stroke="#8c8c8c"/><path d="M10 0.5 V4 H13.5" fill="#fff" stroke="#8c8c8c"/></svg>
<div class="t " style="left:522px;top:360.40px;font-size:13.7px;color:#000;">session (2016_11_16 19_14_11 UTC).json</div>
<div class="t " style="left:821px;top:360.15px;font-size:14.0px;color:#6d6d6d;">16.11.2016 19:26</div>
<div class="t " style="left:970px;top:359.73px;font-size:14.5px;color:#6d6d6d;">JSON-Datei</div>
<div class="t" style="right:716px;top:359.73px;font-size:14.5px;color:#6d6d6d;">1 KB</div>
<svg class="r" style="left:500px;top:383px;" width="14" height="18" viewBox="0 0 14 18"><path d="M0.5 0.5 H10 L13.5 4 V17.5 H0.5 Z" fill="#f7f7f7" stroke="#8c8c8c"/><path d="M10 0.5 V4 H13.5" fill="#fff" stroke="#8c8c8c"/></svg>
<div class="t " style="left:522px;top:387.40px;font-size:13.7px;color:#000;">session (2016_11_27 13_36_01 UTC).json</div>
<div class="t " style="left:821px;top:387.15px;font-size:14.0px;color:#6d6d6d;">27.11.2016 13:32</div>
<div class="t " style="left:970px;top:386.73px;font-size:14.5px;color:#6d6d6d;">JSON-Datei</div>
<div class="t" style="right:716px;top:386.73px;font-size:14.5px;color:#6d6d6d;">1 KB</div>
<svg class="r" style="left:500px;top:410px;" width="14" height="18" viewBox="0 0 14 18"><path d="M0.5 0.5 H10 L13.5 4 V17.5 H0.5 Z" fill="#f7f7f7" stroke="#8c8c8c"/><path d="M10 0.5 V4 H13.5" fill="#fff" stroke="#8c8c8c"/></svg>
<div class="t " style="left:522px;top:414.40px;font-size:13.7px;color:#000;">session (2016_11_27 14_56_31 UTC).json</div>
<div class="t " style="left:821px;top:414.15px;font-size:14.0px;color:#6d6d6d;">27.11.2016 15:32</div>
<div class="t " style="left:970px;top:413.73px;font-size:14.5px;color:#6d6d6d;">JSON-Datei</div>
<div class="t" style="right:716px;top:413.73px;font-size:14.5px;color:#6d6d6d;">1 KB</div>
<svg class="r" style="left:500px;top:437px;" width="14" height="18" viewBox="0 0 14 18"><path d="M0.5 0.5 H10 L13.5 4 V17.5 H0.5 Z" fill="#f7f7f7" stroke="#8c8c8c"/><path d="M10 0.5 V4 H13.5" fill="#fff" stroke="#8c8c8c"/></svg>
<div class="t " style="left:522px;top:441.40px;font-size:13.7px;color:#000;">session (2016_11_27 15_56_42 UTC).json</div>
<div class="t " style="left:821px;top:441.15px;font-size:14.0px;color:#6d6d6d;">27.11.2016 16:27</div>
<div class="t " style="left:970px;top:440.73px;font-size:14.5px;color:#6d6d6d;">JSON-Datei</div>
<div class="t" style="right:716px;top:440.73px;font-size:14.5px;color:#6d6d6d;">1 KB</div>
<svg class="r" style="left:500px;top:464px;" width="14" height="18" viewBox="0 0 14 18"><path d="M0.5 0.5 H10 L13.5 4 V17.5 H0.5 Z" fill="#f7f7f7" stroke="#8c8c8c"/><path d="M10 0.5 V4 H13.5" fill="#fff" stroke="#8c8c8c"/></svg>
<div class="t " style="left:522px;top:468.40px;font-size:13.7px;color:#000;">session (2016_11_27 17_57_10 UTC).json</div>
<div class="t " style="left:821px;top:468.15px;font-size:14.0px;color:#6d6d6d;">27.11.2016 18:12</div>
<div class="t " style="left:970px;top:467.73px;font-size:14.5px;color:#6d6d6d;">JSON-Datei</div>
<div class="t" style="right:716px;top:467.73px;font-size:14.5px;color:#6d6d6d;">1 KB</div>
<svg class="r" style="left:500px;top:491px;" width="14" height="18" viewBox="0 0 14 18"><path d="M0.5 0.5 H10 L13.5 4 V17.5 H0.5 Z" fill="#f7f7f7" stroke="#8c8c8c"/><path d="M10 0.5 V4 H13.5" fill="#fff" stroke="#8c8c8c"/></svg>
<div class="t " style="left:522px;top:495.40px;font-size:13.7px;color:#000;">session (2016_12_02 18_11_24 UTC).json</div>
<div class="t " style="left:821px;top:495.15px;font-size:14.0px;color:#6d6d6d;">27.11.2016 19:26</div>
<div class="t " style="left:970px;top:494.73px;font-size:14.5px;color:#6d6d6d;">JSON-Datei</div>
<div class="t" style="right:716px;top:494.73px;font-size:14.5px;color:#6d6d6d;">1 KB</div>
<svg class="r" style="left:500px;top:518px;" width="14" height="18" viewBox="0 0 14 18"><path d="M0.5 0.5 H10 L13.5 4 V17.5 H0.5 Z" fill="#f7f7f7" stroke="#8c8c8c"/><path d="M10 0.5 V4 H13.5" fill="#fff" stroke="#8c8c8c"/></svg>
<div class="t " style="left:522px;top:522.40px;font-size:13.7px;color:#000;">session (2016_12_03 16_00_35 UTC).json</div>
<div class="t " style="left:821px;top:522.15px;font-size:14.0px;color:#6d6d6d;">02.12.2016 19:45</div>
<div class="t " style="left:970px;top:521.73px;font-size:14.5px;color:#6d6d6d;">JSON-Datei</div>
<div class="t" style="right:716px;top:521.73px;font-size:14.5px;color:#6d6d6d;">1 KB</div>
<svg class="r" style="left:500px;top:545px;" width="14" height="18" viewBox="0 0 14 18"><path d="M0.5 0.5 H10 L13.5 4 V17.5 H0.5 Z" fill="#f7f7f7" stroke="#8c8c8c"/><path d="M10 0.5 V4 H13.5" fill="#fff" stroke="#8c8c8c"/></svg>
<div class="t " style="left:522px;top:549.40px;font-size:13.7px;color:#000;">session (2016_12_04 18_10_46 UTC).json</div>
<div class="t " style="left:821px;top:549.15px;font-size:14.0px;color:#6d6d6d;">04.12.2016 18:38</div>
<div class="t " style="left:970px;top:548.73px;font-size:14.5px;color:#6d6d6d;">JSON-Datei</div>
<div class="t" style="right:716px;top:548.73px;font-size:14.5px;color:#6d6d6d;">1 KB</div>
<svg class="r" style="left:500px;top:572px;" width="14" height="18" viewBox="0 0 14 18"><path d="M0.5 0.5 H10 L13.5 4 V17.5 H0.5 Z" fill="#f7f7f7" stroke="#8c8c8c"/><path d="M10 0.5 V4 H13.5" fill="#fff" stroke="#8c8c8c"/></svg>
<div class="t " style="left:522px;top:576.40px;font-size:13.7px;color:#000;">session (2016_12_07 17_21_59 UTC).json</div>
<div class="t " style="left:821px;top:576.15px;font-size:14.0px;color:#6d6d6d;">04.12.2016 19:12</div>
<div class="t " style="left:970px;top:575.73px;font-size:14.5px;color:#6d6d6d;">JSON-Datei</div>
<div class="t" style="right:716px;top:575.73px;font-size:14.5px;color:#6d6d6d;">1 KB</div>
<svg class="r" style="left:500px;top:599px;" width="14" height="18" viewBox="0 0 14 18"><path d="M0.5 0.5 H10 L13.5 4 V17.5 H0.5 Z" fill="#f7f7f7" stroke="#8c8c8c"/><path d="M10 0.5 V4 H13.5" fill="#fff" stroke="#8c8c8c"/></svg>
<div class="t " style="left:522px;top:603.40px;font-size:13.7px;color:#000;">session (2016_12_10 13_02_33 UTC).json</div>
<div class="t " style="left:821px;top:603.15px;font-size:14.0px;color:#6d6d6d;">10.12.2016 13:50</div>
<div class="t " style="left:970px;top:602.73px;font-size:14.5px;color:#6d6d6d;">JSON-Datei</div>
<div class="t" style="right:716px;top:602.73px;font-size:14.5px;color:#6d6d6d;">1 KB</div>
<svg class="r" style="left:500px;top:626px;" width="14" height="18" viewBox="0 0 14 18"><path d="M0.5 0.5 H10 L13.5 4 V17.5 H0.5 Z" fill="#f7f7f7" stroke="#8c8c8c"/><path d="M10 0.5 V4 H13.5" fill="#fff" stroke="#8c8c8c"/></svg>
<div class="t " style="left:522px;top:630.40px;font-size:13.7px;color:#000;">session (2016_12_11 15_26_25 UTC).json</div>
<div class="t " style="left:821px;top:630.15px;font-size:14.0px;color:#6d6d6d;">10.12.2016 14:03</div>
<div class="t " style="left:970px;top:629.73px;font-size:14.5px;color:#6d6d6d;">JSON-Datei</div>
<div class="t" style="right:716px;top:629.73px;font-size:14.5px;color:#6d6d6d;">1 KB</div>
<svg class="r" style="left:500px;top:653px;" width="14" height="18" viewBox="0 0 14 18"><path d="M0.5 0.5 H10 L13.5 4 V17.5 H0.5 Z" fill="#f7f7f7" stroke="#8c8c8c"/><path d="M10 0.5 V4 H13.5" fill="#fff" stroke="#8c8c8c"/></svg>
<div class="t " style="left:522px;top:657.40px;font-size:13.7px;color:#000;">session (2016_12_21 16_24_27 UTC).json</div>
<div class="t " style="left:821px;top:657.15px;font-size:14.0px;color:#6d6d6d;">21.12.2016 17:21</div>
<div class="t " style="left:970px;top:656.73px;font-size:14.5px;color:#6d6d6d;">JSON-Datei</div>
<div class="t" style="right:716px;top:656.73px;font-size:14.5px;color:#6d6d6d;">1 KB</div>
<svg class="r" style="left:500px;top:680px;" width="14" height="18" viewBox="0 0 14 18"><path d="M0.5 0.5 H10 L13.5 4 V17.5 H0.5 Z" fill="#f7f7f7" stroke="#8c8c8c"/><path d="M10 0.5 V4 H13.5" fill="#fff" stroke="#8c8c8c"/></svg>
<div class="t " style="left:522px;top:684.40px;font-size:13.7px;color:#000;">session (2016_12_23 22_21_12 UTC).json</div>
<div class="t " style="left:821px;top:684.15px;font-size:14.0px;color:#6d6d6d;">23.12.2016 14:04</div>
<div class="t " style="left:970px;top:683.73px;font-size:14.5px;color:#6d6d6d;">JSON-Datei</div>
<div class="t" style="right:716px;top:683.73px;font-size:14.5px;color:#6d6d6d;">1 KB</div>
<div class="r" style="left:492px;top:703px;width:717px;height:27px;background:#e5f3ff;"></div>
<svg class="r" style="left:500px;top:707px;" width="14" height="18" viewBox="0 0 14 18"><path d="M0.5 0.5 H10 L13.5 4 V17.5 H0.5 Z" fill="#f7f7f7" stroke="#8c8c8c"/><path d="M10 0.5 V4 H13.5" fill="#fff" stroke="#8c8c8c"/></svg>
<div class="t " style="left:522px;top:711.40px;font-size:13.7px;color:#000;">session (2016_12_26 10_43_28 UTC).json</div>
<div class="t " style="left:821px;top:711.15px;font-size:14.0px;color:#6d6d6d;">25.12.2016 17:16</div>
<div class="t " style="left:970px;top:710.73px;font-size:14.5px;color:#6d6d6d;">JSON-Datei</div>
<div class="t" style="right:716px;top:710.73px;font-size:14.5px;color:#6d6d6d;">1 KB</div>
<svg class="r" style="left:500px;top:734px;" width="14" height="18" viewBox="0 0 14 18"><path d="M0.5 0.5 H10 L13.5 4 V17.5 H0.5 Z" fill="#f7f7f7" stroke="#8c8c8c"/><path d="M10 0.5 V4 H13.5" fill="#fff" stroke="#8c8c8c"/></svg>
<div class="t " style="left:522px;top:738.40px;font-size:13.7px;color:#000;">session (2016_12_27 17_01_00 UTC).json</div>
<div class="t " style="left:821px;top:738.15px;font-size:14.0px;color:#6d6d6d;">26.12.2016 12:09</div>
<div class="t " style="left:970px;top:737.73px;font-size:14.5px;color:#6d6d6d;">JSON-Datei</div>
<div class="t" style="right:716px;top:737.73px;font-size:14.5px;color:#6d6d6d;">1 KB</div>
<svg class="r" style="left:500px;top:761px;" width="14" height="18" viewBox="0 0 14 18"><path d="M0.5 0.5 H10 L13.5 4 V17.5 H0.5 Z" fill="#f7f7f7" stroke="#8c8c8c"/><path d="M10 0.5 V4 H13.5" fill="#fff" stroke="#8c8c8c"/></svg>
<div class="t " style="left:522px;top:765.40px;font-size:13.7px;color:#000;">session (2016_12_28 20_43_33 UTC).json</div>
<div class="t " style="left:821px;top:765.15px;font-size:14.0px;color:#6d6d6d;">28.12.2016 20:12</div>
<div class="t " style="left:970px;top:764.73px;font-size:14.5px;color:#6d6d6d;">JSON-Datei</div>
<div class="t" style="right:716px;top:764.73px;font-size:14.5px;color:#6d6d6d;">1 KB</div>
<svg class="r" style="left:500px;top:788px;" width="14" height="18" viewBox="0 0 14 18"><path d="M0.5 0.5 H10 L13.5 4 V17.5 H0.5 Z" fill="#f7f7f7" stroke="#8c8c8c"/><path d="M10 0.5 V4 H13.5" fill="#fff" stroke="#8c8c8c"/></svg>
<div class="t " style="left:522px;top:792.40px;font-size:13.7px;color:#000;">session (2016_12_31 18_29_32 UTC).json</div>
<div class="t " style="left:821px;top:792.15px;font-size:14.0px;color:#6d6d6d;">31.12.2016 18:37</div>
<div class="t " style="left:970px;top:791.73px;font-size:14.5px;color:#6d6d6d;">JSON-Datei</div>
<div class="t" style="right:716px;top:791.73px;font-size:14.5px;color:#6d6d6d;">3 KB</div>
<svg class="r" style="left:500px;top:815px;" width="14" height="18" viewBox="0 0 14 18"><path d="M0.5 0.5 H10 L13.5 4 V17.5 H0.5 Z" fill="#f7f7f7" stroke="#8c8c8c"/><path d="M10 0.5 V4 H13.5" fill="#fff" stroke="#8c8c8c"/></svg>
<div class="t " style="left:522px;top:819.40px;font-size:13.7px;color:#000;">session (2016_12_31 20_29_50 UTC).json</div>
<div class="t " style="left:821px;top:819.15px;font-size:14.0px;color:#6d6d6d;">31.12.2016 21:18</div>
<div class="t " style="left:970px;top:818.73px;font-size:14.5px;color:#6d6d6d;">JSON-Datei</div>
<div class="t" style="right:716px;top:818.73px;font-size:14.5px;color:#6d6d6d;">3 KB</div>
<svg class="r" style="left:500px;top:842px;" width="14" height="18" viewBox="0 0 14 18"><path d="M0.5 0.5 H10 L13.5 4 V17.5 H0.5 Z" fill="#f7f7f7" stroke="#8c8c8c"/><path d="M10 0.5 V4 H13.5" fill="#fff" stroke="#8c8c8c"/></svg>
<div class="t " style="left:522px;top:846.40px;font-size:13.7px;color:#000;">session (2016_12_31 21_30_04 UTC).json</div>
<div class="t " style="left:821px;top:846.15px;font-size:14.0px;color:#6d6d6d;">31.12.2016 22:08</div>
<div class="t " style="left:970px;top:845.73px;font-size:14.5px;color:#6d6d6d;">JSON-Datei</div>
<div class="t" style="right:716px;top:845.73px;font-size:14.5px;color:#6d6d6d;">1 KB</div>
<svg class="r" style="left:500px;top:869px;" width="14" height="18" viewBox="0 0 14 18"><path d="M0.5 0.5 H10 L13.5 4 V17.5 H0.5 Z" fill="#f7f7f7" stroke="#8c8c8c"/><path d="M10 0.5 V4 H13.5" fill="#fff" stroke="#8c8c8c"/></svg>
<div class="t " style="left:522px;top:873.40px;font-size:13.7px;color:#000;">session (2016_12_31 23_30_20 UTC).json</div>
<div class="t " style="left:821px;top:873.15px;font-size:14.0px;color:#6d6d6d;">01.01.2017 00:08</div>
<div class="t " style="left:970px;top:872.73px;font-size:14.5px;color:#6d6d6d;">JSON-Datei</div>
<div class="t" style="right:716px;top:872.73px;font-size:14.5px;color:#6d6d6d;">1 KB</div>
<svg class="r" style="left:500px;top:896px;" width="14" height="18" viewBox="0 0 14 18"><path d="M0.5 0.5 H10 L13.5 4 V17.5 H0.5 Z" fill="#f7f7f7" stroke="#8c8c8c"/><path d="M10 0.5 V4 H13.5" fill="#fff" stroke="#8c8c8c"/></svg>
<div class="t " style="left:522px;top:900.40px;font-size:13.7px;color:#000;">session (2017_01_01 01_30_40 UTC).json</div>
<div class="t " style="left:821px;top:900.15px;font-size:14.0px;color:#6d6d6d;">01.01.2017 02:28</div>
<div class="t " style="left:970px;top:899.73px;font-size:14.5px;color:#6d6d6d;">JSON-Datei</div>
<div class="t" style="right:716px;top:899.73px;font-size:14.5px;color:#6d6d6d;">1 KB</div>
<svg class="r" style="left:500px;top:923px;" width="14" height="18" viewBox="0 0 14 18"><path d="M0.5 0.5 H10 L13.5 4 V17.5 H0.5 Z" fill="#f7f7f7" stroke="#8c8c8c"/><path d="M10 0.5 V4 H13.5" fill="#fff" stroke="#8c8c8c"/></svg>
<div class="t " style="left:522px;top:927.40px;font-size:13.7px;color:#000;">session (2017_01_01 10_43_34 UTC).json</div>
<div class="t " style="left:821px;top:927.15px;font-size:14.0px;color:#6d6d6d;">01.01.2017 11:12</div>
<div class="t " style="left:970px;top:926.73px;font-size:14.5px;color:#6d6d6d;">JSON-Datei</div>
<div class="t" style="right:716px;top:926.73px;font-size:14.5px;color:#6d6d6d;">1 KB</div>
<svg class="r" style="left:500px;top:950px;" width="14" height="18" viewBox="0 0 14 18"><path d="M0.5 0.5 H10 L13.5 4 V17.5 H0.5 Z" fill="#f7f7f7" stroke="#8c8c8c"/><path d="M10 0.5 V4 H13.5" fill="#fff" stroke="#8c8c8c"/></svg>
<div class="t " style="left:522px;top:954.40px;font-size:13.7px;color:#000;">session (2017_01_01 18_05_23 UTC).json</div>
<div class="t " style="left:821px;top:954.15px;font-size:14.0px;color:#6d6d6d;">01.01.2017 13:49</div>
<div class="t " style="left:970px;top:953.73px;font-size:14.5px;color:#6d6d6d;">JSON-Datei</div>
<div class="t" style="right:716px;top:953.73px;font-size:14.5px;color:#6d6d6d;">1 KB</div>
<svg class="r" style="left:500px;top:977px;" width="14" height="18" viewBox="0 0 14 18"><path d="M0.5 0.5 H10 L13.5 4 V17.5 H0.5 Z" fill="#f7f7f7" stroke="#8c8c8c"/><path d="M10 0.5 V4 H13.5" fill="#fff" stroke="#8c8c8c"/></svg>
<div class="t " style="left:522px;top:981.40px;font-size:13.7px;color:#000;">session (2017_01_02 11_32_51 UTC).json</div>
<div class="t " style="left:821px;top:981.15px;font-size:14.0px;color:#6d6d6d;">02.01.2017 12:06</div>
<div class="t " style="left:970px;top:980.73px;font-size:14.5px;color:#6d6d6d;">JSON-Datei</div>
<div class="t" style="right:716px;top:980.73px;font-size:14.5px;color:#6d6d6d;">1 KB</div>
</div></div>
<div class="r" style="left:471px;top:218px;width:1429px;height:32px;background:#ffffff;"></div>
<div class="t " style="left:495px;top:227.73px;font-size:14.5px;color:#4c607a;">Name</div>
<div class="t " style="left:821px;top:227.73px;font-size:14.5px;color:#4c607a;">Änderungsdatum</div>
<div class="t " style="left:971px;top:227.73px;font-size:14.5px;color:#4c607a;">Typ</div>
<div class="t " style="left:1121px;top:227.73px;font-size:14.5px;color:#4c607a;">Größe</div>
<div class="r" style="left:813px;top:219px;width:1px;height:31px;background:#e5e5e5;"></div>
<div class="r" style="left:963px;top:219px;width:1px;height:31px;background:#e5e5e5;"></div>
<div class="r" style="left:1113px;top:219px;width:1px;height:31px;background:#e5e5e5;"></div>
<div class="r" style="left:1213px;top:219px;width:1px;height:31px;background:#e5e5e5;"></div>
<svg class="r" style="left:645px;top:218px;" width="11" height="7" viewBox="0 0 11 7"><path d="M1.2 5.8 L5.5 1.5 L9.8 5.8" fill="none" stroke="#555" stroke-width="1.1"/></svg>
<div class="r" style="left:1900px;top:218px;width:20px;height:785px;background:#f0f0f0;"></div>
<div class="r" style="left:1900px;top:751px;width:19px;height:21px;background:#cdcdcd;"></div>
<svg class="r" style="left:1904px;top:223px;" width="12" height="10" viewBox="0 0 12 10"><path d="M1.3 8.5 L5.8 3.2 L10.3 8.5" fill="none" stroke="#555" stroke-width="2"/></svg>
<div class="r" style="left:1888px;top:876px;width:32px;height:124px;background:#202020;"></div>
<svg class="r" style="left:1888px;top:900px;" width="32" height="40" viewBox="0 0 32 40"><circle cx="23.5" cy="27.5" r="6.5" fill="#fff"/><circle cx="32" cy="20" r="9.5" fill="#fff"/><rect x="23.5" y="24" width="9" height="10" fill="#fff"/><circle cx="32" cy="33" r="6.5" fill="#202020"/><circle cx="32" cy="33" r="4.2" fill="none" stroke="#fff" stroke-width="1.6"/></svg>
<div class="r" style="left:0px;top:1003px;width:1920px;height:27px;background:#ffffff;"></div>
<div class="t " style="left:17px;top:1008.81px;font-size:14.4px;color:#000;">2 275 Elemente</div>
<div class="r" style="left:131px;top:1008px;width:1px;height:16px;background:#e8e8e8;"></div>
<div class="t " style="left:145px;top:1008.81px;font-size:14.4px;color:#000;">1 Element ausgewählt (416 Bytes)</div>
<div class="r" style="left:379px;top:1008px;width:1px;height:16px;background:#e8e8e8;"></div>
<div class="r" style="left:1860px;top:1001px;width:27px;height:28px;background:#cce8ff;border:1px solid #3399ff"></div>
<svg class="r" style="left:1865px;top:1008px;" width="18" height="15" viewBox="0 0 18 15"><rect x="0.5" y="0.5" width="4" height="14" fill="#fff" stroke="#999"/><rect x="1.5" y="2" width="2" height="2" fill="#3a7"/><rect x="1.5" y="7" width="2" height="2" fill="#c93"/><rect x="1.5" y="11" width="2" height="2" fill="#c33"/><path d="M7 3 H10 M12 3 H15 M7 7.5 H10 M12 7.5 H15 M7 12 H10 M12 12 H15" stroke="#777" stroke-width="1"/></svg>
<svg class="r" style="left:1892px;top:1008px;" width="18" height="15" viewBox="0 0 18 15"><rect x="0.5" y="0.5" width="17" height="14" fill="#fff" stroke="#999"/><rect x="2" y="2" width="14" height="11" fill="#3a7ab8"/><path d="M2 9 C6 6 10 8 16 10 V13 H2 Z" fill="#4a7a55"/></svg>
<div class="r" style="left:0;top:1030px;width:1920px;height:50px;background:linear-gradient(160deg,#12040b 0%,#0e0307 40%,#150509 70%,#1a0808 100%)"></div>
<svg class="r" style="left:20px;top:1045px;" width="21" height="21" viewBox="0 0 21 21"><path d="M0 3 L9 1.7 V10 H0 Z M10 1.5 L21 0 V10 H10 Z M0 11 H9 V19.3 L0 18 Z M10 11 H21 V21 L10 19.5 Z" fill="#fff"/></svg>
<svg class="r" style="left:80px;top:1045px;" width="21" height="21" viewBox="0 0 21 21"><circle cx="13" cy="8" r="6.5" fill="none" stroke="#fff" stroke-width="1.4"/><path d="M8.5 12.5 L1 20" stroke="#fff" stroke-width="1.5"/></svg>
<svg class="r" style="left:138px;top:1046px;" width="24" height="19" viewBox="0 0 24 19"><rect x="5" y="1" width="14" height="17" fill="none" stroke="#fff" stroke-width="1.4"/><path d="M2.5 3 H0.7 V16 H2.5 M21.5 3 H23.3 V16 H21.5" fill="none" stroke="#fff" stroke-width="1.2"/></svg>
<svg class="r" style="left:201px;top:1042px;" width="26" height="27" viewBox="0 0 26 27"><path d="M1 12 C2 4 9 0 15 0.5 C22 1 26 7 25.5 15 H9.5 C9.5 21 17 23.5 24.5 19.5 V24.5 C15 29 3 25.5 3 16 C3 10.5 8 7.5 12 8.5 C9.5 9.5 9 11 9 12 H18.5 C18.5 6.5 14 5 11 5.5 C6 6.5 2.5 9.5 1 12 Z" fill="#1c7ed8"/></svg>
<div class="r" style="left:251px;top:1077px;width:190px;height:3px;background:#76b9ed;"></div>
<svg class="r" style="left:255px;top:1036px;" width="40" height="36" viewBox="0 0 40 36"><circle cx="20" cy="19" r="12.3" fill="#34b2ee"/><path d="M14.3 17.3 C14.5 13.5 17 12 19.8 12 C22.6 12 25.3 13.5 25.3 17.3 Z" fill="#12040b"/><path d="M14.3 21.7 H33 V28 H25 C23 26.9 21.5 26.8 19.8 26.8 C17 26.8 14.8 25 14.3 21.7 Z" fill="#12040b"/><path d="M12 30.5 C8 31 4.5 29.5 6 26 A17 8 -40 0 1 32 7.1 C34 8.5 33.5 10 32 12" fill="none" stroke="#f0c020" stroke-width="2.2"/></svg>
<div class="t " style="left:293px;top:1048.64px;font-size:14.6px;color:#ffffff;">PC kaputt - neuer L...</div>
<svg class="r" style="left:456px;top:1036px;" width="40" height="38" viewBox="0 0 40 38"><defs><linearGradient id="tb" x1="0" y1="0" x2="1" y2="1"><stop offset="0" stop-color="#5ab0ee"/><stop offset="1" stop-color="#1848a8"/></linearGradient></defs><circle cx="20.3" cy="18.7" r="14" fill="url(#tb)"/><path d="M12 10 C14 6 22 5 27 10 C24 11 20 12 18 13" fill="#7cc4f4" opacity="0.6"/><path d="M9 17.5 L12.5 13 L17 14.5 L20 13.5 L25.5 14 L26 29 L22 28.5 L9 25 Z" fill="#efebe4"/><path d="M12.5 14 L16 20 L25.5 18" fill="none" stroke="#8a8680" stroke-width="0.8"/><circle cx="14.5" cy="12.3" r="0.8" fill="#d04020"/></svg>
<div class="r" style="left:509px;top:1030px;width:200px;height:50px;background:#3c3137;"></div>
<div class="r" style="left:509px;top:1077px;width:200px;height:3px;background:#76b9ed;"></div>
<svg class="r" style="left:527px;top:1042px;" width="17" height="26" viewBox="0 0 17 26"><path d="M0 3.1 L5.1 0 L5.1 0.5 L14.4 0.5 L14.4 19.5 L17 19.5 L17 22.9 L5.1 22.9 L5.1 26 L0 22.9 Z" fill="#f0c85a"/><path d="M5.1 0.5 L14.4 0.5 L14.4 19.5 L17 19.5 L17 22.9 L5.1 22.9 Z" fill="#f6d36e"/><path d="M0 3.1 L5.1 0 L5.1 26 L0 22.9 Z" fill="#fbe59b"/></svg>
<div class="t " style="left:556px;top:1048.64px;font-size:14.6px;color:#ffffff;">kxut94o7.default</div>
<div class="r" style="left:714px;top:1077px;width:190px;height:3px;background:#76b9ed;"></div>
<svg class="r" style="left:726px;top:1042px;" width="17" height="26" viewBox="0 0 17 26"><path d="M0 3.1 L5.1 0 L5.1 0.5 L14.4 0.5 L14.4 19.5 L17 19.5 L17 22.9 L5.1 22.9 L5.1 26 L0 22.9 Z" fill="#f0c85a"/><path d="M5.1 0.5 L14.4 0.5 L14.4 19.5 L17 19.5 L17 22.9 L5.1 22.9 Z" fill="#f6d36e"/><path d="M0 3.1 L5.1 0 L5.1 26 L0 22.9 Z" fill="#fbe59b"/></svg>
<div class="t " style="left:755px;top:1048.64px;font-size:14.6px;color:#ffffff;">Screenshots</div>
<svg class="r" style="left:925px;top:1040px;" width="30" height="30" viewBox="0 0 30 30"><rect x="0" y="0" width="30" height="30" rx="5" fill="#fff"/><rect x="4.5" y="12" width="21" height="3" fill="#c00"/><rect x="6" y="16" width="7" height="10" fill="#b00"/><rect x="17" y="16" width="7" height="10" fill="#b00"/><path d="M15 11 C10 3 5 6 8 10 Z M15 11 C20 3 25 6 22 10 Z" fill="none" stroke="#d00" stroke-width="1.8"/></svg>
<svg class="r" style="left:988px;top:1040px;" width="27" height="30" viewBox="0 0 27 30"><path d="M1 8 L26 7 V30 L1 26 Z" fill="#fff"/><path d="M8 9 C8 0 17 0 17 8" fill="none" stroke="#fff" stroke-width="1.4"/><rect x="4" y="12" width="7" height="4" fill="#12040b"/><rect x="12" y="11.5" width="8" height="4.5" fill="#12040b"/><rect x="4" y="17" width="7" height="4" fill="#12040b"/><rect x="12" y="17" width="8" height="4.5" fill="#12040b"/></svg>
<svg class="r" style="left:1052px;top:1040px;" width="22" height="30" viewBox="0 0 22 30"><rect x="0" y="0" width="22" height="30" fill="#fff"/><rect x="2" y="2" width="18" height="5" fill="#12040b"/><path d="M2 10 h4 l-4 4z M9 10 h4 l-4 4z M16 10 h4 l-4 4z M2 17 h4 l-4 4z M9 17 h4 l-4 4z M16 17 h4 l-4 4z M2 24 h4 l-4 4z M9 24 h4 l-4 4z M16 24 h4 l-4 4z" fill="#12040b"/></svg>
<svg class="r" style="left:1600px;top:1038px;" width="130" height="34" viewBox="0 0 130 34"><path d="M10 21 L18 12.5 L26 21" fill="none" stroke="#fff" stroke-width="1.2"/><path d="M38.5 10 V13.5 M41.5 10 V13.5 M37.5 13.5 H42.5 V15.5 C42.5 17 41.5 17.5 40 17.5 C38.5 17.5 37.5 17 37.5 15.5 Z M40 17.5 V23" fill="none" stroke="#fff" stroke-width="1.1"/><path d="M42 12.5 H56.5 V22.5 H42" fill="none" stroke="#fff" stroke-width="1.1"/><rect x="42" y="14" width="13" height="7.2" fill="#fff"/><rect x="57" y="15" width="1.4" height="5" fill="#fff"/><path d="M71.2 24.5 A13.3 13.3 0 0 1 84.5 11.2 M75.2 24.5 A9.3 9.3 0 0 1 84.5 15.2 M79.2 24.5 A5.3 5.3 0 0 1 84.5 19.2" fill="none" stroke="#fff" stroke-width="1"/><circle cx="84.3" cy="23.3" r="1.3" fill="#fff"/><path d="M98.3 13.5 H101 L104.7 10.3 V23.7 L101 20.5 H98.3 Z" fill="none" stroke="#fff" stroke-width="1"/><path d="M108 14.5 C109 16 109 18 108 19.5 M110.8 12 C112.8 14.5 112.8 19.5 110.8 22 M114 9 C117.5 13 117.5 21 114 25" fill="none" stroke="#fff" stroke-width="0.9"/></svg>
<div class="t " style="left:1731px;top:1048.64px;font-size:14.6px;color:#ffffff;">DEU</div>
<div class="t" style="left:1661px;width:300px;text-align:center;top:1036.64px;font-size:14.6px;color:#ffffff;">21:17</div>
<div class="t" style="left:1661px;width:300px;text-align:center;top:1059.64px;font-size:14.6px;color:#ffffff;">04.03.2017</div>
<svg class="r" style="left:1866px;top:1042px;" width="34" height="34" viewBox="0 0 34 34"><path d="M3 3 H23 V20 H11 L8.5 23 V20 H3 Z" fill="#fff"/><path d="M7 8 H19 M7 11.5 H19 M7 15 H17" stroke="#12040b" stroke-width="1.1"/><circle cx="22.4" cy="22.2" r="9.6" fill="#2b2b2b" stroke="#7a7a7a" stroke-width="1"/><text x="22.4" y="27.5" font-family="Liberation Sans" font-size="15" font-weight="bold" fill="#fff" text-anchor="middle">2</text></svg>
<div class="r" style="left:1914px;top:1030px;width:1px;height:50px;background:#6a5a5e;"></div></body></html>
